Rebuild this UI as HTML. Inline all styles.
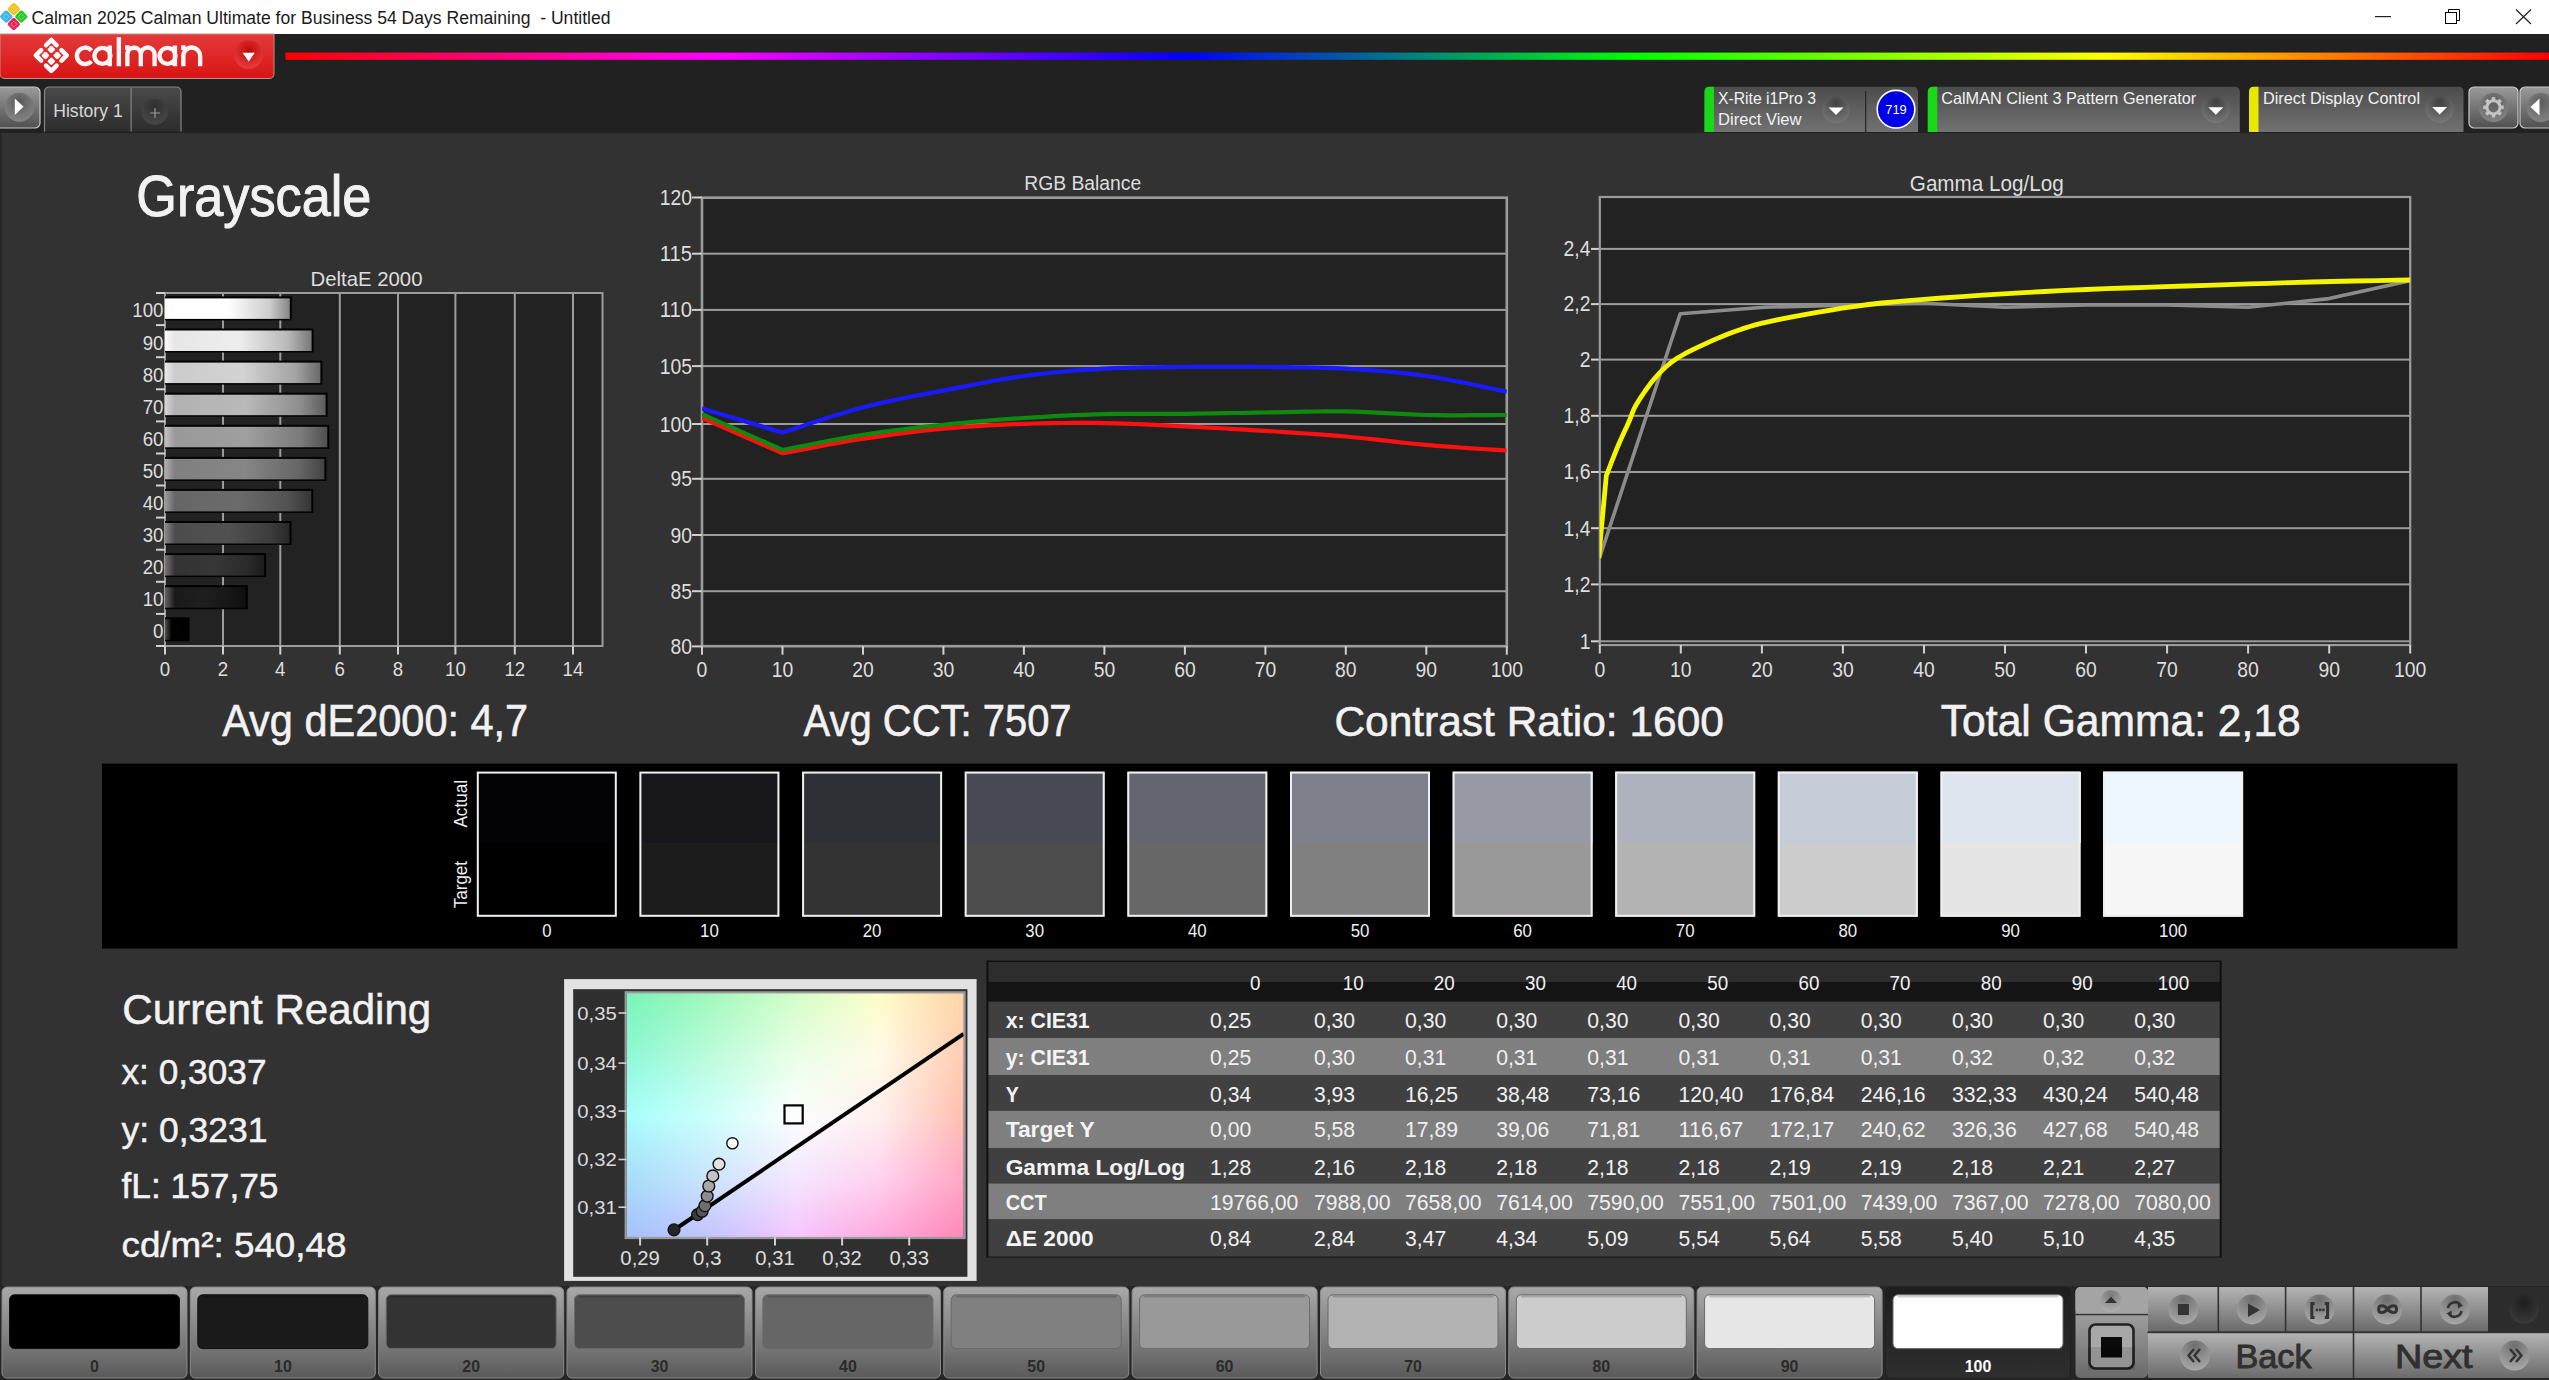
<!DOCTYPE html>
<html><head><meta charset="utf-8"><title>Calman Grayscale</title>
<style>
html,body{margin:0;padding:0;background:#323232;overflow:hidden;}
#app{position:relative;width:2549px;height:1380px;overflow:hidden;}
svg text{font-family:"Liberation Sans", sans-serif;}
</style></head><body><div id="app">
<svg width="2549" height="1380" viewBox="0 0 2549 1380" style="display:block">
<defs><linearGradient id="gRed" x1="0" y1="0" x2="0" y2="1"><stop offset="0" stop-color="#e43a3a"/><stop offset="1" stop-color="#d81414"/></linearGradient><radialGradient id="gRedBtn" cx="0.5" cy="0.35" r="0.6"><stop offset="0" stop-color="#c00a0a"/><stop offset="1" stop-color="#e43a3a"/></radialGradient><linearGradient id="gRain" x1="0" y1="0" x2="1" y2="0"><stop offset="0" stop-color="#ff0000"/><stop offset="0.19" stop-color="#ff00ff"/><stop offset="0.398" stop-color="#0000ff"/><stop offset="0.596" stop-color="#00ff00"/><stop offset="0.803" stop-color="#ffff00"/><stop offset="1" stop-color="#ff0000"/></linearGradient><linearGradient id="gBtnG" x1="0" y1="0" x2="0" y2="1"><stop offset="0" stop-color="#9a9a9a"/><stop offset="1" stop-color="#505050"/></linearGradient><radialGradient id="gCirc" cx="0.5" cy="0.3" r="0.7"><stop offset="0" stop-color="#555"/><stop offset="1" stop-color="#8a8a8a"/></radialGradient><linearGradient id="gTab" x1="0" y1="0" x2="0" y2="1"><stop offset="0" stop-color="#4a4a4a"/><stop offset="1" stop-color="#2c2c2c"/></linearGradient><radialGradient id="gPlus" cx="0.5" cy="0.3" r="0.7"><stop offset="0" stop-color="#2e2e2e"/><stop offset="1" stop-color="#484848"/></radialGradient><linearGradient id="gDev" x1="0" y1="0" x2="0" y2="1"><stop offset="0" stop-color="#4c4c4c"/><stop offset="1" stop-color="#727272"/></linearGradient><radialGradient id="gDrop" cx="0.5" cy="0.25" r="0.75"><stop offset="0" stop-color="#404040"/><stop offset="1" stop-color="#787878"/></radialGradient><linearGradient id="gBar100" x1="0" y1="0" x2="1" y2="0"><stop offset="0" stop-color="#ffffff"/><stop offset="0.079" stop-color="#ffffff"/><stop offset="0.5" stop-color="#ffffff"/><stop offset="0.84" stop-color="#cccccc"/><stop offset="1" stop-color="#858585"/></linearGradient><linearGradient id="gBar90" x1="0" y1="0" x2="1" y2="0"><stop offset="0" stop-color="#fbfbfb"/><stop offset="0.067" stop-color="#e6e6e6"/><stop offset="0.5" stop-color="#eeeeee"/><stop offset="0.84" stop-color="#b8b8b8"/><stop offset="1" stop-color="#787878"/></linearGradient><linearGradient id="gBar80" x1="0" y1="0" x2="1" y2="0"><stop offset="0" stop-color="#e8e8e8"/><stop offset="0.064" stop-color="#cccccc"/><stop offset="0.5" stop-color="#d3d3d3"/><stop offset="0.84" stop-color="#a3a3a3"/><stop offset="1" stop-color="#6a6a6a"/></linearGradient><linearGradient id="gBar70" x1="0" y1="0" x2="1" y2="0"><stop offset="0" stop-color="#d5d5d5"/><stop offset="0.062" stop-color="#b2b2b2"/><stop offset="0.5" stop-color="#b9b9b9"/><stop offset="0.84" stop-color="#8e8e8e"/><stop offset="1" stop-color="#5d5d5d"/></linearGradient><linearGradient id="gBar60" x1="0" y1="0" x2="1" y2="0"><stop offset="0" stop-color="#c2c2c2"/><stop offset="0.061" stop-color="#999999"/><stop offset="0.5" stop-color="#9f9f9f"/><stop offset="0.84" stop-color="#7a7a7a"/><stop offset="1" stop-color="#505050"/></linearGradient><linearGradient id="gBar50" x1="0" y1="0" x2="1" y2="0"><stop offset="0" stop-color="#afafaf"/><stop offset="0.062" stop-color="#808080"/><stop offset="0.5" stop-color="#868686"/><stop offset="0.84" stop-color="#666666"/><stop offset="1" stop-color="#434343"/></linearGradient><linearGradient id="gBar40" x1="0" y1="0" x2="1" y2="0"><stop offset="0" stop-color="#9c9c9c"/><stop offset="0.067" stop-color="#666666"/><stop offset="0.5" stop-color="#6b6b6b"/><stop offset="0.84" stop-color="#525252"/><stop offset="1" stop-color="#353535"/></linearGradient><linearGradient id="gBar30" x1="0" y1="0" x2="1" y2="0"><stop offset="0" stop-color="#898989"/><stop offset="0.079" stop-color="#4c4c4c"/><stop offset="0.5" stop-color="#515151"/><stop offset="0.84" stop-color="#3d3d3d"/><stop offset="1" stop-color="#282828"/></linearGradient><linearGradient id="gBar20" x1="0" y1="0" x2="1" y2="0"><stop offset="0" stop-color="#767676"/><stop offset="0.099" stop-color="#333333"/><stop offset="0.5" stop-color="#373737"/><stop offset="0.84" stop-color="#292929"/><stop offset="1" stop-color="#1b1b1b"/></linearGradient><linearGradient id="gBar10" x1="0" y1="0" x2="1" y2="0"><stop offset="0" stop-color="#636363"/><stop offset="0.121" stop-color="#1a1a1a"/><stop offset="0.5" stop-color="#1e1e1e"/><stop offset="0.84" stop-color="#151515"/><stop offset="1" stop-color="#0e0e0e"/></linearGradient><linearGradient id="gBar0" x1="0" y1="0" x2="1" y2="0"><stop offset="0" stop-color="#505050"/><stop offset="0.300" stop-color="#000000"/><stop offset="0.5" stop-color="#030303"/><stop offset="0.84" stop-color="#000000"/><stop offset="1" stop-color="#000000"/></linearGradient><linearGradient id="gRow0" x1="0" y1="0" x2="1" y2="0"><stop offset="0.0" stop-color="#78f4b6"/><stop offset="0.25" stop-color="#a2f8bc"/><stop offset="0.5" stop-color="#d2fec8"/><stop offset="0.75" stop-color="#fffcc8"/><stop offset="1.0" stop-color="#ffd6a6"/></linearGradient><linearGradient id="gRow1" x1="0" y1="0" x2="1" y2="0"><stop offset="0.0" stop-color="#8ef8d6"/><stop offset="0.25" stop-color="#bcfcdc"/><stop offset="0.5" stop-color="#eaffe6"/><stop offset="0.75" stop-color="#fffbe8"/><stop offset="1.0" stop-color="#ffccb2"/></linearGradient><linearGradient id="gRow2" x1="0" y1="0" x2="1" y2="0"><stop offset="0.0" stop-color="#a6fffc"/><stop offset="0.25" stop-color="#cefffc"/><stop offset="0.5" stop-color="#fcfffe"/><stop offset="0.75" stop-color="#fff0ee"/><stop offset="1.0" stop-color="#ffbeb0"/></linearGradient><linearGradient id="gRow3" x1="0" y1="0" x2="1" y2="0"><stop offset="0.0" stop-color="#a8def8"/><stop offset="0.25" stop-color="#cce6ff"/><stop offset="0.5" stop-color="#f4e8ff"/><stop offset="0.75" stop-color="#ffd4f0"/><stop offset="1.0" stop-color="#ffa8c4"/></linearGradient><linearGradient id="gRow4" x1="0" y1="0" x2="1" y2="0"><stop offset="0.0" stop-color="#a4c2ff"/><stop offset="0.25" stop-color="#c6c4ff"/><stop offset="0.5" stop-color="#f6c6ff"/><stop offset="0.75" stop-color="#ffaadc"/><stop offset="1.0" stop-color="#ff88b8"/></linearGradient><linearGradient id="gMk3" x1="0" y1="0" x2="0" y2="1"><stop offset="0.75" stop-color="#fff"/><stop offset="1.0" stop-color="#000"/></linearGradient><mask id="mk3" maskUnits="userSpaceOnUse" x="626.7" y="993.3" width="336.9" height="243.70000000000005"><rect x="626.7" y="993.3" width="336.9" height="243.70000000000005" fill="url(#gMk3)"/></mask><linearGradient id="gMk2" x1="0" y1="0" x2="0" y2="1"><stop offset="0.5" stop-color="#fff"/><stop offset="0.75" stop-color="#000"/></linearGradient><mask id="mk2" maskUnits="userSpaceOnUse" x="626.7" y="993.3" width="336.9" height="243.70000000000005"><rect x="626.7" y="993.3" width="336.9" height="243.70000000000005" fill="url(#gMk2)"/></mask><linearGradient id="gMk1" x1="0" y1="0" x2="0" y2="1"><stop offset="0.25" stop-color="#fff"/><stop offset="0.5" stop-color="#000"/></linearGradient><mask id="mk1" maskUnits="userSpaceOnUse" x="626.7" y="993.3" width="336.9" height="243.70000000000005"><rect x="626.7" y="993.3" width="336.9" height="243.70000000000005" fill="url(#gMk1)"/></mask><linearGradient id="gMk0" x1="0" y1="0" x2="0" y2="1"><stop offset="0.0" stop-color="#fff"/><stop offset="0.25" stop-color="#000"/></linearGradient><mask id="mk0" maskUnits="userSpaceOnUse" x="626.7" y="993.3" width="336.9" height="243.70000000000005"><rect x="626.7" y="993.3" width="336.9" height="243.70000000000005" fill="url(#gMk0)"/></mask><linearGradient id="gSw" x1="0" y1="0" x2="0" y2="1"><stop offset="0" stop-color="#a8a8a8"/><stop offset="0.62" stop-color="#7a7a7a"/><stop offset="1" stop-color="#5a5a5a"/></linearGradient><linearGradient id="gSwSel" x1="0" y1="0" x2="0" y2="1"><stop offset="0" stop-color="#1e1e1e"/><stop offset="1" stop-color="#2e2e2e"/></linearGradient><linearGradient id="gCtl" x1="0" y1="0" x2="0" y2="1"><stop offset="0" stop-color="#b4b4b4"/><stop offset="1" stop-color="#6a6a6a"/></linearGradient><radialGradient id="gCtlC" cx="0.5" cy="0.2" r="0.8"><stop offset="0" stop-color="#7a7a7a"/><stop offset="1" stop-color="#b0b0b0"/></radialGradient><radialGradient id="gDark" cx="0.5" cy="0.3" r="0.7"><stop offset="0" stop-color="#1e1e1e"/><stop offset="1" stop-color="#3a3a3a"/></radialGradient><radialGradient id="gTr" cx="0.5" cy="0.15" r="0.85"><stop offset="0" stop-color="#6e6e6e"/><stop offset="1" stop-color="#a8a8a8"/></radialGradient></defs>
<rect x="0" y="0" width="2549" height="34" fill="#ffffff"/>
<g transform="translate(13.8,16.6) rotate(45)"><rect x="-10.2" y="-10.2" width="9.8" height="9.8" rx="2" fill="#f7c21b"/><rect x="0.4" y="-10.2" width="9.8" height="9.8" rx="2" fill="#2ac82a"/><rect x="-10.2" y="0.4" width="9.8" height="9.8" rx="2" fill="#38b6f0"/><rect x="0.4" y="0.4" width="9.8" height="9.8" rx="2" fill="#e8245a"/><rect x="-7.4" y="-7.4" width="4.2" height="4.2" fill="none" stroke="#fff" stroke-opacity="0.45" stroke-width="0.8"/><rect x="3.2" y="-7.4" width="4.2" height="4.2" fill="none" stroke="#fff" stroke-opacity="0.45" stroke-width="0.8"/><rect x="-7.4" y="3.2" width="4.2" height="4.2" fill="none" stroke="#fff" stroke-opacity="0.45" stroke-width="0.8"/><rect x="3.2" y="3.2" width="4.2" height="4.2" fill="none" stroke="#fff" stroke-opacity="0.45" stroke-width="0.8"/></g>
<text x="31.5" y="23.9" font-size="19.19" fill="#1a1a1a" text-anchor="start" textLength="579.0" lengthAdjust="spacingAndGlyphs" xml:space="preserve">Calman 2025 Calman Ultimate for Business 54 Days Remaining  - Untitled</text>
<rect x="2375" y="16" width="16" height="1.2" fill="#222"/>
<rect x="2445.5" y="12.5" width="11" height="11" fill="none" stroke="#000" stroke-width="1"/>
<path d="M2448.5 12.5 V9.5 H2459.5 V20.5 H2456.5" fill="none" stroke="#000" stroke-width="1"/>
<path d="M2516 9.5 L2531 24 M2531 9.5 L2516 24" stroke="#222" stroke-width="1.2"/>
<rect x="0" y="34" width="2549" height="99" fill="#212121"/>
<path d="M0 34 H274 V73.5 Q274 78.5 269 78.5 H5 Q0 78.5 0 73.5 Z" fill="url(#gRed)" stroke="#c09088" stroke-width="1"/>
<g transform="translate(51.3 55.4) scale(1.07) rotate(45)"><path d="M-10.2 -3.2 V-10.2 H-3.2 M3.2 -10.2 H10.2 V-3.2 M10.2 3.2 V10.2 H3.2 M-3.2 10.2 H-10.2 V3.2" fill="none" stroke="#fff" stroke-width="4.2" stroke-linecap="round" stroke-linejoin="round"/><rect x="-6.7" y="-6.7" width="5.6" height="5.6" rx="1.3" fill="#fff"/><rect x="1.1" y="-6.7" width="5.6" height="5.6" rx="1.3" fill="#fff"/><rect x="-6.7" y="1.1" width="5.6" height="5.6" rx="1.3" fill="#fff"/><rect x="1.1" y="1.1" width="5.6" height="5.6" rx="1.3" fill="#fff"/></g>
<path d="M91.38 50.58 A8.20 8.20 0 1 0 91.38 61.12 M94.40 55.85 A8.00 8.00 0 1 0 110.40 55.85 A8.00 8.00 0 1 0 94.40 55.85 Z M109.80 45.4 V66.3 M159.50 55.85 A8.00 8.00 0 1 0 175.50 55.85 A8.00 8.00 0 1 0 159.50 55.85 Z M174.90 45.4 V66.3 M118.85 37.3 V66.3 M127.35 66.3 V54.23 A6.73 6.73 0 0 1 140.8 54.23 V66.3 M140.8 54.40 A6.90 6.90 0 0 1 154.6 54.40 V66.3 M127.35 45.3 V50 M183.35 66.3 V55.90 A8.40 8.40 0 0 1 200.15 55.90 V66.3 M183.35 45.3 V50" fill="none" stroke="#fdf6f6" stroke-width="4.4" stroke-linecap="butt"/>
<circle cx="248.6" cy="54.6" r="14.4" fill="url(#gRedBtn)"/>
<path d="M242.6 52.8 H254.8 L248.7 61.5 Z" fill="#fff"/>
<rect x="285.5" y="52.6" width="2263.5" height="7.2" fill="url(#gRain)"/>
<rect x="-6" y="87" width="46" height="41" rx="5" fill="url(#gBtnG)" stroke="#c8c8c8" stroke-width="1.2"/>
<circle cx="19.5" cy="107.3" r="14.5" fill="url(#gCirc)" opacity="0.9"/>
<path d="M14.8 98.5 L23.5 106.8 L14.8 115 Z" fill="#fff"/>
<path d="M44.5 131.5 V92 Q44.5 87 49.5 87 H176 Q181 87 181 92 V131.5" fill="url(#gTab)" stroke="#858585" stroke-width="1.2"/>
<rect x="130.5" y="88" width="1.2" height="43.5" fill="#858585"/>
<text x="53.2" y="116.7" font-size="18.17" fill="#d8d8d8" text-anchor="start" textLength="69.5" lengthAdjust="spacingAndGlyphs">History 1</text>
<circle cx="154.7" cy="111.7" r="13" fill="url(#gPlus)"/>
<path d="M150 113 H160 M155 108 V118" stroke="#9a9a9a" stroke-width="1.2"/>
<path d="M1704.5 132 V92 Q1704.5 86.7 1709.5 86.7 H1913 Q1918 86.7 1918 92 V132 Z" fill="url(#gDev)"/>
<path d="M1704.5 132 V92 Q1704.5 86.7 1709.5 86.7 H1714.0 V132 Z" fill="#18d818"/>
<text x="1718.0" y="104.0" font-size="16.42" fill="#f2f2f2" text-anchor="start" textLength="98.0" lengthAdjust="spacingAndGlyphs">X-Rite i1Pro 3</text>
<text x="1718.0" y="125.4" font-size="16.42" fill="#f2f2f2" text-anchor="start" textLength="83.5" lengthAdjust="spacingAndGlyphs">Direct View</text>
<circle cx="1836" cy="109.6" r="14" fill="url(#gDrop)"/>
<path d="M1828.5 107.6 H1843.5 L1836 115.1 Z" fill="#fff"/>
<rect x="1865" y="91" width="1.3" height="41" fill="#2a2a2a"/>
<circle cx="1896" cy="109.2" r="18.8" fill="#0000e6" stroke="#ffffff" stroke-width="1.6"/>
<text x="1885.3" y="113.8" font-size="12.06" fill="#ffffff" text-anchor="start" textLength="21.5" lengthAdjust="spacingAndGlyphs">719</text>
<path d="M1927.8 132 V92 Q1927.8 86.7 1932.8 86.7 H2234.8 Q2239.8 86.7 2239.8 92 V132 Z" fill="url(#gDev)"/>
<path d="M1927.8 132 V92 Q1927.8 86.7 1932.8 86.7 H1937.3 V132 Z" fill="#18d818"/>
<text x="1941.2" y="104.0" font-size="16.28" fill="#f2f2f2" text-anchor="start" textLength="255.0" lengthAdjust="spacingAndGlyphs">CalMAN Client 3 Pattern Generator</text>
<circle cx="2215.8" cy="109.3" r="14" fill="url(#gDrop)"/>
<path d="M2208.3 107.3 H2223.3 L2215.8 114.8 Z" fill="#fff"/>
<path d="M2249 132 V92 Q2249 86.7 2254 86.7 H2458.5 Q2463.5 86.7 2463.5 92 V132 Z" fill="url(#gDev)"/>
<path d="M2249 132 V92 Q2249 86.7 2254 86.7 H2258.5 V132 Z" fill="#e8e800"/>
<text x="2263.0" y="104.0" font-size="16.28" fill="#f2f2f2" text-anchor="start" textLength="157.0" lengthAdjust="spacingAndGlyphs">Direct Display Control</text>
<circle cx="2439.6" cy="108.9" r="14" fill="url(#gDrop)"/>
<path d="M2432.1 106.9 H2447.1 L2439.6 114.4 Z" fill="#fff"/>
<rect x="2469" y="87" width="49" height="41" rx="5" fill="url(#gBtnG)" stroke="#c8c8c8" stroke-width="1.2"/>
<circle cx="2493.5" cy="107.5" r="14.5" fill="url(#gCirc)" opacity="0.85"/>
<g transform="translate(2493.5 107.3)"><rect x="-1.8" y="-10.2" width="3.6" height="4.5" transform="rotate(0)" fill="#c4c4c4"/><rect x="-1.8" y="-10.2" width="3.6" height="4.5" transform="rotate(45)" fill="#c4c4c4"/><rect x="-1.8" y="-10.2" width="3.6" height="4.5" transform="rotate(90)" fill="#c4c4c4"/><rect x="-1.8" y="-10.2" width="3.6" height="4.5" transform="rotate(135)" fill="#c4c4c4"/><rect x="-1.8" y="-10.2" width="3.6" height="4.5" transform="rotate(180)" fill="#c4c4c4"/><rect x="-1.8" y="-10.2" width="3.6" height="4.5" transform="rotate(225)" fill="#c4c4c4"/><rect x="-1.8" y="-10.2" width="3.6" height="4.5" transform="rotate(270)" fill="#c4c4c4"/><rect x="-1.8" y="-10.2" width="3.6" height="4.5" transform="rotate(315)" fill="#c4c4c4"/><circle r="6.6" fill="none" stroke="#c4c4c4" stroke-width="3"/></g>
<rect x="2520" y="87" width="40" height="41" rx="5" fill="url(#gBtnG)" stroke="#c8c8c8" stroke-width="1.2"/>
<circle cx="2541" cy="107.5" r="14.5" fill="url(#gCirc)" opacity="0.85"/>
<path d="M2539.5 98.5 L2530.5 107 L2539.5 115.5 Z" fill="#fff"/>
<rect x="0" y="133" width="2549" height="1153" fill="#323232"/>
<rect x="0" y="133" width="2" height="1153" fill="#262626"/>
<text x="136.3" y="216.0" font-size="58.14" fill="#f2f2f2" text-anchor="start" textLength="235.0" lengthAdjust="spacingAndGlyphs" stroke="#f2f2f2" stroke-width="1.0">Grayscale</text>
<text x="310.5" y="285.5" font-size="20.49" fill="#dedede" text-anchor="start" textLength="112.0" lengthAdjust="spacingAndGlyphs">DeltaE 2000</text>
<rect x="165" y="293" width="437.5" height="353" fill="#222222"/>
<rect x="222.0" y="293" width="2" height="353" fill="#9c9c9c"/>
<rect x="279.3" y="293" width="2" height="353" fill="#9c9c9c"/>
<rect x="338.8" y="293" width="2" height="353" fill="#9c9c9c"/>
<rect x="397.0" y="293" width="2" height="353" fill="#9c9c9c"/>
<rect x="454.4" y="293" width="2" height="353" fill="#9c9c9c"/>
<rect x="513.8" y="293" width="2" height="353" fill="#9c9c9c"/>
<rect x="572.0" y="293" width="2" height="353" fill="#9c9c9c"/>
<rect x="165" y="293" width="437.5" height="353" fill="none" stroke="#9c9c9c" stroke-width="2"/>
<rect x="164.0" y="646" width="2" height="8.5" fill="#d0d0d0"/>
<text x="165.0" y="676.4" font-size="20.35" fill="#dedede" text-anchor="middle" textLength="10.4" lengthAdjust="spacingAndGlyphs">0</text>
<rect x="222.0" y="646" width="2" height="8.5" fill="#d0d0d0"/>
<text x="223.0" y="676.4" font-size="20.35" fill="#dedede" text-anchor="middle" textLength="10.4" lengthAdjust="spacingAndGlyphs">2</text>
<rect x="279.3" y="646" width="2" height="8.5" fill="#d0d0d0"/>
<text x="280.3" y="676.4" font-size="20.35" fill="#dedede" text-anchor="middle" textLength="10.4" lengthAdjust="spacingAndGlyphs">4</text>
<rect x="338.8" y="646" width="2" height="8.5" fill="#d0d0d0"/>
<text x="339.8" y="676.4" font-size="20.35" fill="#dedede" text-anchor="middle" textLength="10.4" lengthAdjust="spacingAndGlyphs">6</text>
<rect x="397.0" y="646" width="2" height="8.5" fill="#d0d0d0"/>
<text x="398.0" y="676.4" font-size="20.35" fill="#dedede" text-anchor="middle" textLength="10.4" lengthAdjust="spacingAndGlyphs">8</text>
<rect x="454.4" y="646" width="2" height="8.5" fill="#d0d0d0"/>
<text x="455.4" y="676.4" font-size="20.35" fill="#dedede" text-anchor="middle" textLength="20.8" lengthAdjust="spacingAndGlyphs">10</text>
<rect x="513.8" y="646" width="2" height="8.5" fill="#d0d0d0"/>
<text x="514.8" y="676.4" font-size="20.35" fill="#dedede" text-anchor="middle" textLength="20.8" lengthAdjust="spacingAndGlyphs">12</text>
<rect x="572.0" y="646" width="2" height="8.5" fill="#d0d0d0"/>
<text x="573.0" y="676.4" font-size="20.35" fill="#dedede" text-anchor="middle" textLength="20.8" lengthAdjust="spacingAndGlyphs">14</text>
<rect x="156" y="292.0" width="9" height="2" fill="#d0d0d0"/>
<rect x="156" y="324.1" width="9" height="2" fill="#d0d0d0"/>
<rect x="156" y="356.2" width="9" height="2" fill="#d0d0d0"/>
<rect x="156" y="388.3" width="9" height="2" fill="#d0d0d0"/>
<rect x="156" y="420.4" width="9" height="2" fill="#d0d0d0"/>
<rect x="156" y="452.5" width="9" height="2" fill="#d0d0d0"/>
<rect x="156" y="484.5" width="9" height="2" fill="#d0d0d0"/>
<rect x="156" y="516.6" width="9" height="2" fill="#d0d0d0"/>
<rect x="156" y="548.7" width="9" height="2" fill="#d0d0d0"/>
<rect x="156" y="580.8" width="9" height="2" fill="#d0d0d0"/>
<rect x="156" y="612.9" width="9" height="2" fill="#d0d0d0"/>
<rect x="156" y="645.0" width="9" height="2" fill="#d0d0d0"/>
<text x="132.3" y="317.4" font-size="20.35" fill="#dedede" text-anchor="start" textLength="31.2" lengthAdjust="spacingAndGlyphs">100</text>
<rect x="165" y="296.4" width="126.8" height="24" fill="#000"/>
<rect x="165" y="298.4" width="124.8" height="20.5" fill="url(#gBar100)"/>
<text x="142.7" y="349.5" font-size="20.35" fill="#dedede" text-anchor="start" textLength="20.8" lengthAdjust="spacingAndGlyphs">90</text>
<rect x="165" y="328.5" width="148.6" height="24" fill="#000"/>
<rect x="165" y="330.5" width="146.6" height="20.5" fill="url(#gBar90)"/>
<text x="142.7" y="381.6" font-size="20.35" fill="#dedede" text-anchor="start" textLength="20.8" lengthAdjust="spacingAndGlyphs">80</text>
<rect x="165" y="360.6" width="157.4" height="24" fill="#000"/>
<rect x="165" y="362.6" width="155.4" height="20.5" fill="url(#gBar80)"/>
<text x="142.7" y="413.7" font-size="20.35" fill="#dedede" text-anchor="start" textLength="20.8" lengthAdjust="spacingAndGlyphs">70</text>
<rect x="165" y="392.7" width="162.6" height="24" fill="#000"/>
<rect x="165" y="394.7" width="160.6" height="20.5" fill="url(#gBar70)"/>
<text x="142.7" y="445.8" font-size="20.35" fill="#dedede" text-anchor="start" textLength="20.8" lengthAdjust="spacingAndGlyphs">60</text>
<rect x="165" y="424.8" width="164.3" height="24" fill="#000"/>
<rect x="165" y="426.8" width="162.3" height="20.5" fill="url(#gBar60)"/>
<text x="142.7" y="477.9" font-size="20.35" fill="#dedede" text-anchor="start" textLength="20.8" lengthAdjust="spacingAndGlyphs">50</text>
<rect x="165" y="456.9" width="161.4" height="24" fill="#000"/>
<rect x="165" y="458.9" width="159.4" height="20.5" fill="url(#gBar50)"/>
<text x="142.7" y="510.0" font-size="20.35" fill="#dedede" text-anchor="start" textLength="20.8" lengthAdjust="spacingAndGlyphs">40</text>
<rect x="165" y="488.9" width="148.3" height="24" fill="#000"/>
<rect x="165" y="490.9" width="146.3" height="20.5" fill="url(#gBar40)"/>
<text x="142.7" y="542.1" font-size="20.35" fill="#dedede" text-anchor="start" textLength="20.8" lengthAdjust="spacingAndGlyphs">30</text>
<rect x="165" y="521.0" width="126.5" height="24" fill="#000"/>
<rect x="165" y="523.0" width="124.5" height="20.5" fill="url(#gBar30)"/>
<text x="142.7" y="574.2" font-size="20.35" fill="#dedede" text-anchor="start" textLength="20.8" lengthAdjust="spacingAndGlyphs">20</text>
<rect x="165" y="553.1" width="101.1" height="24" fill="#000"/>
<rect x="165" y="555.1" width="99.1" height="20.5" fill="url(#gBar20)"/>
<text x="142.7" y="606.3" font-size="20.35" fill="#dedede" text-anchor="start" textLength="20.8" lengthAdjust="spacingAndGlyphs">10</text>
<rect x="165" y="585.2" width="82.8" height="24" fill="#000"/>
<rect x="165" y="587.2" width="80.8" height="20.5" fill="url(#gBar10)"/>
<text x="153.1" y="638.4" font-size="20.35" fill="#dedede" text-anchor="start" textLength="10.4" lengthAdjust="spacingAndGlyphs">0</text>
<rect x="165" y="617.3" width="24.5" height="24" fill="#000"/>
<rect x="165" y="619.3" width="22.5" height="20.5" fill="url(#gBar0)"/>
<text x="1024.2" y="190.1" font-size="21.08" fill="#dedede" text-anchor="start" textLength="117.0" lengthAdjust="spacingAndGlyphs">RGB Balance</text>
<rect x="702" y="197.7" width="804.8" height="448.50000000000006" fill="#222222"/>
<rect x="702" y="590.2" width="804.8" height="2" fill="#9c9c9c"/>
<rect x="702" y="534.0" width="804.8" height="2" fill="#9c9c9c"/>
<rect x="702" y="477.8" width="804.8" height="2" fill="#9c9c9c"/>
<rect x="702" y="423.0" width="804.8" height="2" fill="#9c9c9c"/>
<rect x="702" y="365.1" width="804.8" height="2" fill="#9c9c9c"/>
<rect x="702" y="308.9" width="804.8" height="2" fill="#9c9c9c"/>
<rect x="702" y="252.7" width="804.8" height="2" fill="#9c9c9c"/>
<rect x="702" y="197.7" width="804.8" height="448.50000000000006" fill="none" stroke="#9c9c9c" stroke-width="2.6"/>
<rect x="692" y="645.4" width="10" height="2" fill="#d0d0d0"/>
<text x="670.5" y="653.9" font-size="21.22" fill="#dedede" text-anchor="start" textLength="21.5" lengthAdjust="spacingAndGlyphs">80</text>
<rect x="692" y="590.2" width="10" height="2" fill="#d0d0d0"/>
<text x="670.5" y="598.7" font-size="21.22" fill="#dedede" text-anchor="start" textLength="21.5" lengthAdjust="spacingAndGlyphs">85</text>
<rect x="692" y="534.0" width="10" height="2" fill="#d0d0d0"/>
<text x="670.5" y="542.5" font-size="21.22" fill="#dedede" text-anchor="start" textLength="21.5" lengthAdjust="spacingAndGlyphs">90</text>
<rect x="692" y="477.8" width="10" height="2" fill="#d0d0d0"/>
<text x="670.5" y="486.3" font-size="21.22" fill="#dedede" text-anchor="start" textLength="21.5" lengthAdjust="spacingAndGlyphs">95</text>
<rect x="692" y="423.0" width="10" height="2" fill="#d0d0d0"/>
<text x="659.7" y="431.5" font-size="21.22" fill="#dedede" text-anchor="start" textLength="32.3" lengthAdjust="spacingAndGlyphs">100</text>
<rect x="692" y="365.1" width="10" height="2" fill="#d0d0d0"/>
<text x="659.7" y="373.6" font-size="21.22" fill="#dedede" text-anchor="start" textLength="32.3" lengthAdjust="spacingAndGlyphs">105</text>
<rect x="692" y="308.9" width="10" height="2" fill="#d0d0d0"/>
<text x="659.7" y="317.4" font-size="21.22" fill="#dedede" text-anchor="start" textLength="32.3" lengthAdjust="spacingAndGlyphs">110</text>
<rect x="692" y="252.7" width="10" height="2" fill="#d0d0d0"/>
<text x="659.7" y="261.2" font-size="21.22" fill="#dedede" text-anchor="start" textLength="32.3" lengthAdjust="spacingAndGlyphs">115</text>
<rect x="692" y="196.5" width="10" height="2" fill="#d0d0d0"/>
<text x="659.7" y="205.0" font-size="21.22" fill="#dedede" text-anchor="start" textLength="32.3" lengthAdjust="spacingAndGlyphs">120</text>
<rect x="701.0" y="646.2" width="2" height="8.5" fill="#d0d0d0"/>
<text x="702.0" y="676.8" font-size="21.22" fill="#dedede" text-anchor="middle" textLength="10.8" lengthAdjust="spacingAndGlyphs">0</text>
<rect x="781.5" y="646.2" width="2" height="8.5" fill="#d0d0d0"/>
<text x="782.5" y="676.8" font-size="21.22" fill="#dedede" text-anchor="middle" textLength="21.5" lengthAdjust="spacingAndGlyphs">10</text>
<rect x="862.0" y="646.2" width="2" height="8.5" fill="#d0d0d0"/>
<text x="863.0" y="676.8" font-size="21.22" fill="#dedede" text-anchor="middle" textLength="21.5" lengthAdjust="spacingAndGlyphs">20</text>
<rect x="942.4" y="646.2" width="2" height="8.5" fill="#d0d0d0"/>
<text x="943.4" y="676.8" font-size="21.22" fill="#dedede" text-anchor="middle" textLength="21.5" lengthAdjust="spacingAndGlyphs">30</text>
<rect x="1022.9" y="646.2" width="2" height="8.5" fill="#d0d0d0"/>
<text x="1023.9" y="676.8" font-size="21.22" fill="#dedede" text-anchor="middle" textLength="21.5" lengthAdjust="spacingAndGlyphs">40</text>
<rect x="1103.4" y="646.2" width="2" height="8.5" fill="#d0d0d0"/>
<text x="1104.4" y="676.8" font-size="21.22" fill="#dedede" text-anchor="middle" textLength="21.5" lengthAdjust="spacingAndGlyphs">50</text>
<rect x="1183.9" y="646.2" width="2" height="8.5" fill="#d0d0d0"/>
<text x="1184.9" y="676.8" font-size="21.22" fill="#dedede" text-anchor="middle" textLength="21.5" lengthAdjust="spacingAndGlyphs">60</text>
<rect x="1264.4" y="646.2" width="2" height="8.5" fill="#d0d0d0"/>
<text x="1265.4" y="676.8" font-size="21.22" fill="#dedede" text-anchor="middle" textLength="21.5" lengthAdjust="spacingAndGlyphs">70</text>
<rect x="1344.8" y="646.2" width="2" height="8.5" fill="#d0d0d0"/>
<text x="1345.8" y="676.8" font-size="21.22" fill="#dedede" text-anchor="middle" textLength="21.5" lengthAdjust="spacingAndGlyphs">80</text>
<rect x="1425.3" y="646.2" width="2" height="8.5" fill="#d0d0d0"/>
<text x="1426.3" y="676.8" font-size="21.22" fill="#dedede" text-anchor="middle" textLength="21.5" lengthAdjust="spacingAndGlyphs">90</text>
<rect x="1505.8" y="646.2" width="2" height="8.5" fill="#d0d0d0"/>
<text x="1506.8" y="676.8" font-size="21.22" fill="#dedede" text-anchor="middle" textLength="32.3" lengthAdjust="spacingAndGlyphs">100</text>
<svg x="702" y="197.7" width="804.8" height="448.50000000000006" overflow="hidden"><g transform="translate(-702,-197.7)">
<path d="M702.0 418.0 L782.5 453.3 L788.7 452.2 L796.9 450.6 L806.8 448.7 L817.7 446.7 L829.2 444.5 L841.0 442.4 L852.3 440.5 L863.0 438.8 L873.0 437.3 L883.1 435.8 L893.1 434.4 L903.2 433.1 L913.3 431.9 L923.3 430.7 L933.4 429.7 L943.4 428.7 L953.5 427.8 L963.6 427.0 L973.6 426.3 L983.7 425.7 L993.7 425.1 L1003.8 424.7 L1013.9 424.2 L1023.9 423.9 L1034.0 423.5 L1044.0 423.3 L1054.1 423.1 L1064.2 423.0 L1074.2 422.9 L1084.3 422.9 L1094.3 422.9 L1104.4 423.1 L1114.5 423.3 L1124.5 423.6 L1134.6 424.0 L1144.6 424.4 L1154.7 424.9 L1164.8 425.4 L1174.8 425.9 L1184.9 426.4 L1194.9 426.9 L1205.0 427.5 L1215.1 428.0 L1225.1 428.5 L1235.2 429.1 L1245.2 429.7 L1255.3 430.3 L1265.4 430.9 L1275.4 431.5 L1285.5 432.2 L1295.5 432.8 L1305.6 433.5 L1315.7 434.2 L1325.7 434.9 L1335.8 435.7 L1345.8 436.5 L1355.9 437.5 L1366.0 438.5 L1376.0 439.6 L1386.1 440.7 L1396.1 441.9 L1406.2 443.0 L1416.3 444.0 L1426.3 444.9 L1436.9 445.8 L1448.3 446.7 L1460.0 447.5 L1471.6 448.3 L1482.5 449.0 L1492.3 449.6 L1500.6 450.1 L1506.8 450.5" fill="none" stroke="#ff1010" stroke-width="4.2" stroke-linejoin="miter"/>
<path d="M702.0 414.1 L782.5 450.0 L788.7 448.8 L796.9 447.1 L806.8 445.2 L817.7 443.0 L829.2 440.8 L841.0 438.6 L852.3 436.6 L863.0 434.8 L873.0 433.3 L883.1 431.9 L893.1 430.5 L903.2 429.3 L913.3 428.1 L923.3 426.9 L933.4 425.8 L943.4 424.8 L953.5 423.7 L963.6 422.8 L973.6 421.9 L983.7 421.0 L993.7 420.2 L1003.8 419.4 L1013.9 418.7 L1023.9 418.0 L1034.0 417.4 L1044.0 416.8 L1054.1 416.2 L1064.2 415.7 L1074.2 415.2 L1084.3 414.8 L1094.3 414.4 L1104.4 414.1 L1114.5 413.9 L1124.5 413.8 L1134.6 413.8 L1144.6 413.8 L1154.7 413.8 L1164.8 413.8 L1174.8 413.8 L1184.9 413.8 L1194.9 413.7 L1205.0 413.5 L1215.1 413.4 L1225.1 413.2 L1235.2 413.0 L1245.2 412.9 L1255.3 412.7 L1265.4 412.5 L1275.4 412.4 L1285.5 412.1 L1295.5 411.9 L1305.6 411.7 L1315.7 411.5 L1325.7 411.4 L1335.8 411.3 L1345.8 411.4 L1355.9 411.7 L1366.0 412.1 L1376.0 412.6 L1386.1 413.1 L1396.1 413.7 L1406.2 414.2 L1416.3 414.7 L1426.3 415.0 L1436.9 415.2 L1448.3 415.3 L1460.0 415.3 L1471.6 415.2 L1482.5 415.2 L1492.3 415.1 L1500.6 415.0 L1506.8 415.0" fill="none" stroke="#0f8a0f" stroke-width="4.2" stroke-linejoin="miter"/>
<path d="M702.0 408.5 L782.5 432.6 L788.7 430.6 L796.9 427.9 L806.8 424.6 L817.7 421.0 L829.2 417.3 L841.0 413.7 L852.3 410.3 L863.0 407.4 L873.0 404.9 L883.1 402.5 L893.1 400.4 L903.2 398.3 L913.3 396.3 L923.3 394.4 L933.4 392.5 L943.4 390.6 L953.5 388.6 L963.6 386.6 L973.6 384.6 L983.7 382.7 L993.7 380.8 L1003.8 379.1 L1013.9 377.4 L1023.9 376.0 L1034.0 374.7 L1044.0 373.5 L1054.1 372.5 L1064.2 371.5 L1074.2 370.7 L1084.3 369.9 L1094.3 369.3 L1104.4 368.7 L1114.5 368.2 L1124.5 367.8 L1134.6 367.6 L1144.6 367.4 L1154.7 367.3 L1164.8 367.2 L1174.8 367.1 L1184.9 367.0 L1194.9 366.9 L1205.0 366.9 L1215.1 366.8 L1225.1 366.8 L1235.2 366.8 L1245.2 366.9 L1255.3 366.9 L1265.4 367.0 L1275.4 367.1 L1285.5 367.2 L1295.5 367.3 L1305.6 367.4 L1315.7 367.6 L1325.7 367.8 L1335.8 368.2 L1345.8 368.7 L1355.9 369.3 L1366.0 369.9 L1376.0 370.6 L1386.1 371.5 L1396.1 372.4 L1406.2 373.4 L1416.3 374.6 L1426.3 376.0 L1436.9 377.6 L1448.3 379.7 L1460.0 381.9 L1471.6 384.3 L1482.5 386.6 L1492.3 388.7 L1500.6 390.4 L1506.8 391.7" fill="none" stroke="#1a1aff" stroke-width="4.2" stroke-linejoin="miter"/>
</g></svg>
<text x="1909.8" y="190.5" font-size="21.22" fill="#dedede" text-anchor="start" textLength="154.0" lengthAdjust="spacingAndGlyphs">Gamma Log/Log</text>
<rect x="1599.8" y="197.0" width="810.3999999999999" height="448.0" fill="#222222"/>
<rect x="1599.8" y="640.3" width="810.3999999999999" height="2" fill="#9c9c9c"/>
<rect x="1591" y="640.3" width="9" height="2" fill="#d0d0d0"/>
<text x="1579.7" y="648.6" font-size="21.22" fill="#dedede" text-anchor="start" textLength="10.8" lengthAdjust="spacingAndGlyphs">1</text>
<rect x="1599.8" y="583.4" width="810.3999999999999" height="2" fill="#9c9c9c"/>
<rect x="1591" y="583.4" width="9" height="2" fill="#d0d0d0"/>
<text x="1563.6" y="591.7" font-size="21.22" fill="#dedede" text-anchor="start" textLength="26.9" lengthAdjust="spacingAndGlyphs">1,2</text>
<rect x="1599.8" y="527.2" width="810.3999999999999" height="2" fill="#9c9c9c"/>
<rect x="1591" y="527.2" width="9" height="2" fill="#d0d0d0"/>
<text x="1563.6" y="535.5" font-size="21.22" fill="#dedede" text-anchor="start" textLength="26.9" lengthAdjust="spacingAndGlyphs">1,4</text>
<rect x="1599.8" y="471.0" width="810.3999999999999" height="2" fill="#9c9c9c"/>
<rect x="1591" y="471.0" width="9" height="2" fill="#d0d0d0"/>
<text x="1563.6" y="479.3" font-size="21.22" fill="#dedede" text-anchor="start" textLength="26.9" lengthAdjust="spacingAndGlyphs">1,6</text>
<rect x="1599.8" y="414.8" width="810.3999999999999" height="2" fill="#9c9c9c"/>
<rect x="1591" y="414.8" width="9" height="2" fill="#d0d0d0"/>
<text x="1563.6" y="423.1" font-size="21.22" fill="#dedede" text-anchor="start" textLength="26.9" lengthAdjust="spacingAndGlyphs">1,8</text>
<rect x="1599.8" y="358.6" width="810.3999999999999" height="2" fill="#9c9c9c"/>
<rect x="1591" y="358.6" width="9" height="2" fill="#d0d0d0"/>
<text x="1579.7" y="366.9" font-size="21.22" fill="#dedede" text-anchor="start" textLength="10.8" lengthAdjust="spacingAndGlyphs">2</text>
<rect x="1599.8" y="303.1" width="810.3999999999999" height="2" fill="#9c9c9c"/>
<rect x="1591" y="303.1" width="9" height="2" fill="#d0d0d0"/>
<text x="1563.6" y="311.4" font-size="21.22" fill="#dedede" text-anchor="start" textLength="26.9" lengthAdjust="spacingAndGlyphs">2,2</text>
<rect x="1599.8" y="247.9" width="810.3999999999999" height="2" fill="#9c9c9c"/>
<rect x="1591" y="247.9" width="9" height="2" fill="#d0d0d0"/>
<text x="1563.6" y="256.2" font-size="21.22" fill="#dedede" text-anchor="start" textLength="26.9" lengthAdjust="spacingAndGlyphs">2,4</text>
<rect x="1599.8" y="197.0" width="810.3999999999999" height="448.0" fill="none" stroke="#9c9c9c" stroke-width="2.2"/>
<rect x="1598.8" y="645" width="2" height="8.5" fill="#d0d0d0"/>
<text x="1599.8" y="676.8" font-size="21.22" fill="#dedede" text-anchor="middle" textLength="10.8" lengthAdjust="spacingAndGlyphs">0</text>
<rect x="1679.8" y="645" width="2" height="8.5" fill="#d0d0d0"/>
<text x="1680.8" y="676.8" font-size="21.22" fill="#dedede" text-anchor="middle" textLength="21.5" lengthAdjust="spacingAndGlyphs">10</text>
<rect x="1760.9" y="645" width="2" height="8.5" fill="#d0d0d0"/>
<text x="1761.9" y="676.8" font-size="21.22" fill="#dedede" text-anchor="middle" textLength="21.5" lengthAdjust="spacingAndGlyphs">20</text>
<rect x="1841.9" y="645" width="2" height="8.5" fill="#d0d0d0"/>
<text x="1842.9" y="676.8" font-size="21.22" fill="#dedede" text-anchor="middle" textLength="21.5" lengthAdjust="spacingAndGlyphs">30</text>
<rect x="1923.0" y="645" width="2" height="8.5" fill="#d0d0d0"/>
<text x="1924.0" y="676.8" font-size="21.22" fill="#dedede" text-anchor="middle" textLength="21.5" lengthAdjust="spacingAndGlyphs">40</text>
<rect x="2004.0" y="645" width="2" height="8.5" fill="#d0d0d0"/>
<text x="2005.0" y="676.8" font-size="21.22" fill="#dedede" text-anchor="middle" textLength="21.5" lengthAdjust="spacingAndGlyphs">50</text>
<rect x="2085.0" y="645" width="2" height="8.5" fill="#d0d0d0"/>
<text x="2086.0" y="676.8" font-size="21.22" fill="#dedede" text-anchor="middle" textLength="21.5" lengthAdjust="spacingAndGlyphs">60</text>
<rect x="2166.1" y="645" width="2" height="8.5" fill="#d0d0d0"/>
<text x="2167.1" y="676.8" font-size="21.22" fill="#dedede" text-anchor="middle" textLength="21.5" lengthAdjust="spacingAndGlyphs">70</text>
<rect x="2247.1" y="645" width="2" height="8.5" fill="#d0d0d0"/>
<text x="2248.1" y="676.8" font-size="21.22" fill="#dedede" text-anchor="middle" textLength="21.5" lengthAdjust="spacingAndGlyphs">80</text>
<rect x="2328.2" y="645" width="2" height="8.5" fill="#d0d0d0"/>
<text x="2329.2" y="676.8" font-size="21.22" fill="#dedede" text-anchor="middle" textLength="21.5" lengthAdjust="spacingAndGlyphs">90</text>
<rect x="2409.2" y="645" width="2" height="8.5" fill="#d0d0d0"/>
<text x="2410.2" y="676.8" font-size="21.22" fill="#dedede" text-anchor="middle" textLength="32.3" lengthAdjust="spacingAndGlyphs">100</text>
<svg x="1599.8" y="197.0" width="810.3999999999999" height="448.0" overflow="hidden"><g transform="translate(-1599.8,-197.0)">
<path d="M1598.7 560.4 L1680.2 313.7 L1764.0 307.2 L1843.0 305.3 L1924.0 303.3 L2005.0 307.3 L2086.0 304.9 L2167.0 304.9 L2248.0 307.3 L2329.0 298.6 L2410.0 280.7" fill="none" stroke="#8c8c8c" stroke-width="3.6" stroke-linejoin="round"/>
<path d="M1598.7 558.3 L1606.3 475.7 L1608.5 470.1 L1611.6 461.9 L1615.1 453.1 L1618.3 445.2 L1621.2 438.6 L1624.0 432.4 L1626.7 426.7 L1629.1 421.3 L1631.0 416.7 L1632.4 412.7 L1634.1 408.7 L1636.7 403.9 L1640.5 397.8 L1645.1 391.0 L1650.1 384.1 L1655.2 377.8 L1660.1 372.4 L1665.1 367.5 L1670.6 362.9 L1677.0 358.3 L1684.9 353.7 L1693.8 349.1 L1703.0 344.8 L1711.7 340.9 L1719.7 337.4 L1727.4 334.3 L1734.8 331.5 L1742.2 328.9 L1749.0 326.7 L1755.3 324.9 L1762.1 323.2 L1770.4 321.3 L1780.7 319.1 L1792.3 316.9 L1804.7 314.6 L1817.1 312.4 L1829.5 310.3 L1842.3 308.2 L1855.3 306.3 L1868.6 304.5 L1881.6 303.0 L1894.6 301.8 L1908.4 300.6 L1924.0 299.4 L1942.0 298.0 L1961.9 296.6 L1982.6 295.1 L2003.2 293.8 L2023.8 292.6 L2044.8 291.5 L2065.7 290.4 L2086.3 289.5 L2106.3 288.7 L2125.9 288.0 L2145.5 287.4 L2165.5 286.7 L2186.0 286.0 L2206.8 285.3 L2227.7 284.6 L2248.6 283.9 L2269.5 283.3 L2290.4 282.6 L2311.2 282.0 L2331.8 281.5 L2353.9 281.0 L2377.1 280.6 L2397.7 280.2 L2412.0 280.0" fill="none" stroke="#f5f500" stroke-width="4.8" stroke-linejoin="round"/>
</g></svg>
<text x="222.2" y="735.9" font-size="44.19" fill="#f2f2f2" text-anchor="start" textLength="306.0" lengthAdjust="spacingAndGlyphs" stroke="#f2f2f2" stroke-width="0.6">Avg dE2000: 4,7</text>
<text x="803.6" y="735.9" font-size="43.90" fill="#f2f2f2" text-anchor="start" textLength="268.0" lengthAdjust="spacingAndGlyphs" stroke="#f2f2f2" stroke-width="0.6">Avg CCT: 7507</text>
<text x="1334.4" y="736.1" font-size="43.31" fill="#f2f2f2" text-anchor="start" textLength="389.5" lengthAdjust="spacingAndGlyphs" stroke="#f2f2f2" stroke-width="0.6">Contrast Ratio: 1600</text>
<text x="1940.8" y="735.6" font-size="43.60" fill="#f2f2f2" text-anchor="start" textLength="360.0" lengthAdjust="spacingAndGlyphs" stroke="#f2f2f2" stroke-width="0.6">Total Gamma: 2,18</text>
<rect x="102" y="763.6" width="2355.5" height="185" fill="#000000"/>
<rect x="476.8" y="771.6" width="140" height="145" fill="#000000"/>
<rect x="476.8" y="771.6" width="140" height="71.4" fill="#030305" shape-rendering="crispEdges"/>
<rect x="477.8" y="772.6" width="138" height="143.2" fill="none" stroke="#f0f0f0" stroke-width="2"/>
<text x="546.8" y="936.8" font-size="18.31" fill="#f0f0f0" text-anchor="middle" textLength="9.3" lengthAdjust="spacingAndGlyphs">0</text>
<rect x="639.4" y="771.6" width="140" height="145" fill="#1c1c1c"/>
<rect x="639.4" y="771.6" width="140" height="71.4" fill="#16161b" shape-rendering="crispEdges"/>
<rect x="640.4" y="772.6" width="138" height="143.2" fill="none" stroke="#f0f0f0" stroke-width="2"/>
<text x="709.4" y="936.8" font-size="18.31" fill="#f0f0f0" text-anchor="middle" textLength="18.7" lengthAdjust="spacingAndGlyphs">10</text>
<rect x="802.1" y="771.6" width="140" height="145" fill="#333333"/>
<rect x="802.1" y="771.6" width="140" height="71.4" fill="#2f2f36" shape-rendering="crispEdges"/>
<rect x="803.1" y="772.6" width="138" height="143.2" fill="none" stroke="#f0f0f0" stroke-width="2"/>
<text x="872.1" y="936.8" font-size="18.31" fill="#f0f0f0" text-anchor="middle" textLength="18.7" lengthAdjust="spacingAndGlyphs">20</text>
<rect x="964.7" y="771.6" width="140" height="145" fill="#4d4d4d"/>
<rect x="964.7" y="771.6" width="140" height="71.4" fill="#4a4a54" shape-rendering="crispEdges"/>
<rect x="965.7" y="772.6" width="138" height="143.2" fill="none" stroke="#f0f0f0" stroke-width="2"/>
<text x="1034.7" y="936.8" font-size="18.31" fill="#f0f0f0" text-anchor="middle" textLength="18.7" lengthAdjust="spacingAndGlyphs">30</text>
<rect x="1127.3" y="771.6" width="140" height="145" fill="#676767"/>
<rect x="1127.3" y="771.6" width="140" height="71.4" fill="#65656f" shape-rendering="crispEdges"/>
<rect x="1128.3" y="772.6" width="138" height="143.2" fill="none" stroke="#f0f0f0" stroke-width="2"/>
<text x="1197.3" y="936.8" font-size="18.31" fill="#f0f0f0" text-anchor="middle" textLength="18.7" lengthAdjust="spacingAndGlyphs">40</text>
<rect x="1290.0" y="771.6" width="140" height="145" fill="#808080"/>
<rect x="1290.0" y="771.6" width="140" height="71.4" fill="#7e818b" shape-rendering="crispEdges"/>
<rect x="1291.0" y="772.6" width="138" height="143.2" fill="none" stroke="#f0f0f0" stroke-width="2"/>
<text x="1360.0" y="936.8" font-size="18.31" fill="#f0f0f0" text-anchor="middle" textLength="18.7" lengthAdjust="spacingAndGlyphs">50</text>
<rect x="1452.6" y="771.6" width="140" height="145" fill="#999999"/>
<rect x="1452.6" y="771.6" width="140" height="71.4" fill="#979aa5" shape-rendering="crispEdges"/>
<rect x="1453.6" y="772.6" width="138" height="143.2" fill="none" stroke="#f0f0f0" stroke-width="2"/>
<text x="1522.6" y="936.8" font-size="18.31" fill="#f0f0f0" text-anchor="middle" textLength="18.7" lengthAdjust="spacingAndGlyphs">60</text>
<rect x="1615.2" y="771.6" width="140" height="145" fill="#b3b3b3"/>
<rect x="1615.2" y="771.6" width="140" height="71.4" fill="#adb2bd" shape-rendering="crispEdges"/>
<rect x="1616.2" y="772.6" width="138" height="143.2" fill="none" stroke="#f0f0f0" stroke-width="2"/>
<text x="1685.2" y="936.8" font-size="18.31" fill="#f0f0f0" text-anchor="middle" textLength="18.7" lengthAdjust="spacingAndGlyphs">70</text>
<rect x="1777.8" y="771.6" width="140" height="145" fill="#cccccc"/>
<rect x="1777.8" y="771.6" width="140" height="71.4" fill="#c6ccd7" shape-rendering="crispEdges"/>
<rect x="1778.8" y="772.6" width="138" height="143.2" fill="none" stroke="#f0f0f0" stroke-width="2"/>
<text x="1847.8" y="936.8" font-size="18.31" fill="#f0f0f0" text-anchor="middle" textLength="18.7" lengthAdjust="spacingAndGlyphs">80</text>
<rect x="1940.5" y="771.6" width="140" height="145" fill="#e5e5e5"/>
<rect x="1940.5" y="771.6" width="140" height="71.4" fill="#dee5ee" shape-rendering="crispEdges"/>
<rect x="1941.5" y="772.6" width="138" height="143.2" fill="none" stroke="#f0f0f0" stroke-width="2"/>
<text x="2010.5" y="936.8" font-size="18.31" fill="#f0f0f0" text-anchor="middle" textLength="18.7" lengthAdjust="spacingAndGlyphs">90</text>
<rect x="2103.1" y="771.6" width="140" height="145" fill="#f7f7f7"/>
<rect x="2103.1" y="771.6" width="140" height="71.4" fill="#eff7fe" shape-rendering="crispEdges"/>
<rect x="2104.1" y="772.6" width="138" height="143.2" fill="none" stroke="#f0f0f0" stroke-width="2"/>
<text x="2173.1" y="936.8" font-size="18.31" fill="#f0f0f0" text-anchor="middle" textLength="28.0" lengthAdjust="spacingAndGlyphs">100</text>
<g transform="translate(467 827.6) rotate(-90)"><text x="0.0" y="0.0" font-size="17.88" fill="#f0f0f0" text-anchor="start" textLength="47.6" lengthAdjust="spacingAndGlyphs">Actual</text></g>
<g transform="translate(467 908.3) rotate(-90)"><text x="0.0" y="0.0" font-size="17.88" fill="#f0f0f0" text-anchor="start" textLength="47.4" lengthAdjust="spacingAndGlyphs">Target</text></g>
<text x="122.3" y="1023.7" font-size="42.73" fill="#f2f2f2" text-anchor="start" textLength="309.0" lengthAdjust="spacingAndGlyphs" stroke="#f2f2f2" stroke-width="0.5">Current Reading</text>
<text x="121.5" y="1083.7" font-size="35.90" fill="#f2f2f2" text-anchor="start" textLength="145.0" lengthAdjust="spacingAndGlyphs" stroke="#f2f2f2" stroke-width="0.5">x: 0,3037</text>
<text x="121.5" y="1141.8" font-size="35.90" fill="#f2f2f2" text-anchor="start" textLength="146.0" lengthAdjust="spacingAndGlyphs" stroke="#f2f2f2" stroke-width="0.5">y: 0,3231</text>
<text x="121.5" y="1198.3" font-size="35.90" fill="#f2f2f2" text-anchor="start" textLength="157.0" lengthAdjust="spacingAndGlyphs" stroke="#f2f2f2" stroke-width="0.5">fL: 157,75</text>
<text x="121.5" y="1256.6" font-size="35.90" fill="#f2f2f2" text-anchor="start" textLength="225.0" lengthAdjust="spacingAndGlyphs" stroke="#f2f2f2" stroke-width="0.5">cd/m²: 540,48</text>
<rect x="564.1" y="979.1" width="412.5" height="301.8" fill="#e2e2e2"/>
<rect x="573.2" y="989.2" width="394.2" height="287.6" fill="#2f2f2f"/>
<g><rect x="626.7" y="993.3" width="336.9" height="243.70000000000005" fill="url(#gRow4)"/><rect x="626.7" y="993.3" width="336.9" height="243.70000000000005" fill="url(#gRow3)" mask="url(#mk3)"/><rect x="626.7" y="993.3" width="336.9" height="243.70000000000005" fill="url(#gRow2)" mask="url(#mk2)"/><rect x="626.7" y="993.3" width="336.9" height="243.70000000000005" fill="url(#gRow1)" mask="url(#mk1)"/><rect x="626.7" y="993.3" width="336.9" height="243.70000000000005" fill="url(#gRow0)" mask="url(#mk0)"/></g>
<rect x="625.7" y="992.3" width="338.9" height="245.70000000000005" fill="none" stroke="#9a9a9a" stroke-width="2.2"/>
<rect x="618.5" y="1012.2" width="8" height="1.6" fill="#d0d0d0"/>
<text x="577.3" y="1019.8" font-size="19.19" fill="#dcdcdc" text-anchor="start" textLength="39.5" lengthAdjust="spacingAndGlyphs">0,35</text>
<rect x="618.5" y="1062.3" width="8" height="1.6" fill="#d0d0d0"/>
<text x="577.3" y="1069.9" font-size="19.19" fill="#dcdcdc" text-anchor="start" textLength="39.5" lengthAdjust="spacingAndGlyphs">0,34</text>
<rect x="618.5" y="1110.3" width="8" height="1.6" fill="#d0d0d0"/>
<text x="577.3" y="1117.9" font-size="19.19" fill="#dcdcdc" text-anchor="start" textLength="39.5" lengthAdjust="spacingAndGlyphs">0,33</text>
<rect x="618.5" y="1158.7" width="8" height="1.6" fill="#d0d0d0"/>
<text x="577.3" y="1166.3" font-size="19.19" fill="#dcdcdc" text-anchor="start" textLength="39.5" lengthAdjust="spacingAndGlyphs">0,32</text>
<rect x="618.5" y="1206.4" width="8" height="1.6" fill="#d0d0d0"/>
<text x="577.3" y="1214.0" font-size="19.19" fill="#dcdcdc" text-anchor="start" textLength="39.5" lengthAdjust="spacingAndGlyphs">0,31</text>
<rect x="639.1" y="1237" width="2" height="8.5" fill="#d0d0d0"/>
<text x="640.1" y="1265.4" font-size="19.77" fill="#dcdcdc" text-anchor="middle" textLength="39.5" lengthAdjust="spacingAndGlyphs">0,29</text>
<rect x="706.2" y="1237" width="2" height="8.5" fill="#d0d0d0"/>
<text x="707.2" y="1265.4" font-size="19.77" fill="#dcdcdc" text-anchor="middle" textLength="29.0" lengthAdjust="spacingAndGlyphs">0,3</text>
<rect x="774.0" y="1237" width="2" height="8.5" fill="#d0d0d0"/>
<text x="775.0" y="1265.4" font-size="19.77" fill="#dcdcdc" text-anchor="middle" textLength="39.5" lengthAdjust="spacingAndGlyphs">0,31</text>
<rect x="841.1" y="1237" width="2" height="8.5" fill="#d0d0d0"/>
<text x="842.1" y="1265.4" font-size="19.77" fill="#dcdcdc" text-anchor="middle" textLength="39.5" lengthAdjust="spacingAndGlyphs">0,32</text>
<rect x="908.2" y="1237" width="2" height="8.5" fill="#d0d0d0"/>
<text x="909.2" y="1265.4" font-size="19.77" fill="#dcdcdc" text-anchor="middle" textLength="39.5" lengthAdjust="spacingAndGlyphs">0,33</text>
<svg x="626.7" y="993.3" width="336.9" height="243.70000000000005" overflow="hidden"><g transform="translate(-626.7,-993.3)">
<path d="M674 1230 L963.6 1033.9" stroke="#000" stroke-width="4"/>
<rect x="784.5" y="1105.4" width="18.2" height="18" fill="none" stroke="#000" stroke-width="2.2"/>
<circle cx="674" cy="1229.8" r="5.9" fill="#252525" stroke="#111" stroke-width="1.4"/>
<circle cx="697.6" cy="1214.6" r="5.9" fill="#3c3c3c" stroke="#111" stroke-width="1.4"/>
<circle cx="702.1" cy="1211.3" r="5.9" fill="#555555" stroke="#111" stroke-width="1.4"/>
<circle cx="704.9" cy="1205.7" r="5.9" fill="#6e6e6e" stroke="#111" stroke-width="1.4"/>
<circle cx="707.2" cy="1196.1" r="5.9" fill="#8c8c8c" stroke="#111" stroke-width="1.4"/>
<circle cx="708.8" cy="1186" r="5.9" fill="#a8a8a8" stroke="#111" stroke-width="1.4"/>
<circle cx="712.8" cy="1175.9" r="5.9" fill="#c4c4c4" stroke="#111" stroke-width="1.4"/>
<circle cx="719" cy="1164.1" r="5.9" fill="#e2e2e2" stroke="#111" stroke-width="1.4"/>
<circle cx="732.4" cy="1143.3" r="5.6" fill="#ffffff" stroke="#111" stroke-width="1.4"/>
</g></svg>
<rect x="986.4" y="960.5" width="1235.2999999999997" height="297" fill="#101010"/>
<rect x="988.4" y="962" width="1231.2999999999997" height="20" fill="#2d2d2d"/>
<rect x="988.4" y="982" width="1231.2999999999997" height="19.6" fill="#141414"/>
<text x="1255.3" y="989.5" font-size="20.35" fill="#f0f0f0" text-anchor="middle" textLength="10.5" lengthAdjust="spacingAndGlyphs">0</text>
<text x="1353.2" y="989.5" font-size="20.35" fill="#f0f0f0" text-anchor="middle" textLength="20.9" lengthAdjust="spacingAndGlyphs">10</text>
<text x="1444.3" y="989.5" font-size="20.35" fill="#f0f0f0" text-anchor="middle" textLength="20.9" lengthAdjust="spacingAndGlyphs">20</text>
<text x="1535.5" y="989.5" font-size="20.35" fill="#f0f0f0" text-anchor="middle" textLength="20.9" lengthAdjust="spacingAndGlyphs">30</text>
<text x="1626.6" y="989.5" font-size="20.35" fill="#f0f0f0" text-anchor="middle" textLength="20.9" lengthAdjust="spacingAndGlyphs">40</text>
<text x="1717.8" y="989.5" font-size="20.35" fill="#f0f0f0" text-anchor="middle" textLength="20.9" lengthAdjust="spacingAndGlyphs">50</text>
<text x="1808.9" y="989.5" font-size="20.35" fill="#f0f0f0" text-anchor="middle" textLength="20.9" lengthAdjust="spacingAndGlyphs">60</text>
<text x="1900.0" y="989.5" font-size="20.35" fill="#f0f0f0" text-anchor="middle" textLength="20.9" lengthAdjust="spacingAndGlyphs">70</text>
<text x="1991.2" y="989.5" font-size="20.35" fill="#f0f0f0" text-anchor="middle" textLength="20.9" lengthAdjust="spacingAndGlyphs">80</text>
<text x="2082.3" y="989.5" font-size="20.35" fill="#f0f0f0" text-anchor="middle" textLength="20.9" lengthAdjust="spacingAndGlyphs">90</text>
<text x="2173.5" y="989.5" font-size="20.35" fill="#f0f0f0" text-anchor="middle" textLength="31.4" lengthAdjust="spacingAndGlyphs">100</text>
<rect x="988.4" y="1001.6" width="1231.2999999999997" height="36.4" fill="#404040"/>
<text x="1005.7" y="1028.2" font-size="22.97" fill="#f4f4f4" text-anchor="start" font-weight="bold" textLength="84.0" lengthAdjust="spacingAndGlyphs">x: CIE31</text>
<text x="1210.0" y="1028.2" font-size="22.97" fill="#f0f0f0" text-anchor="start" textLength="41.2" lengthAdjust="spacingAndGlyphs">0,25</text>
<text x="1313.9" y="1028.2" font-size="22.97" fill="#f0f0f0" text-anchor="start" textLength="41.2" lengthAdjust="spacingAndGlyphs">0,30</text>
<text x="1405.0" y="1028.2" font-size="22.97" fill="#f0f0f0" text-anchor="start" textLength="41.2" lengthAdjust="spacingAndGlyphs">0,30</text>
<text x="1496.2" y="1028.2" font-size="22.97" fill="#f0f0f0" text-anchor="start" textLength="41.2" lengthAdjust="spacingAndGlyphs">0,30</text>
<text x="1587.3" y="1028.2" font-size="22.97" fill="#f0f0f0" text-anchor="start" textLength="41.2" lengthAdjust="spacingAndGlyphs">0,30</text>
<text x="1678.5" y="1028.2" font-size="22.97" fill="#f0f0f0" text-anchor="start" textLength="41.2" lengthAdjust="spacingAndGlyphs">0,30</text>
<text x="1769.6" y="1028.2" font-size="22.97" fill="#f0f0f0" text-anchor="start" textLength="41.2" lengthAdjust="spacingAndGlyphs">0,30</text>
<text x="1860.7" y="1028.2" font-size="22.97" fill="#f0f0f0" text-anchor="start" textLength="41.2" lengthAdjust="spacingAndGlyphs">0,30</text>
<text x="1951.9" y="1028.2" font-size="22.97" fill="#f0f0f0" text-anchor="start" textLength="41.2" lengthAdjust="spacingAndGlyphs">0,30</text>
<text x="2043.0" y="1028.2" font-size="22.97" fill="#f0f0f0" text-anchor="start" textLength="41.2" lengthAdjust="spacingAndGlyphs">0,30</text>
<text x="2134.2" y="1028.2" font-size="22.97" fill="#f0f0f0" text-anchor="start" textLength="41.2" lengthAdjust="spacingAndGlyphs">0,30</text>
<rect x="988.4" y="1038.0" width="1231.2999999999997" height="37.0" fill="#7f7f7f"/>
<text x="1005.7" y="1064.6" font-size="22.97" fill="#f4f4f4" text-anchor="start" font-weight="bold" textLength="84.0" lengthAdjust="spacingAndGlyphs">y: CIE31</text>
<text x="1210.0" y="1064.6" font-size="22.97" fill="#f0f0f0" text-anchor="start" textLength="41.2" lengthAdjust="spacingAndGlyphs">0,25</text>
<text x="1313.9" y="1064.6" font-size="22.97" fill="#f0f0f0" text-anchor="start" textLength="41.2" lengthAdjust="spacingAndGlyphs">0,30</text>
<text x="1405.0" y="1064.6" font-size="22.97" fill="#f0f0f0" text-anchor="start" textLength="41.2" lengthAdjust="spacingAndGlyphs">0,31</text>
<text x="1496.2" y="1064.6" font-size="22.97" fill="#f0f0f0" text-anchor="start" textLength="41.2" lengthAdjust="spacingAndGlyphs">0,31</text>
<text x="1587.3" y="1064.6" font-size="22.97" fill="#f0f0f0" text-anchor="start" textLength="41.2" lengthAdjust="spacingAndGlyphs">0,31</text>
<text x="1678.5" y="1064.6" font-size="22.97" fill="#f0f0f0" text-anchor="start" textLength="41.2" lengthAdjust="spacingAndGlyphs">0,31</text>
<text x="1769.6" y="1064.6" font-size="22.97" fill="#f0f0f0" text-anchor="start" textLength="41.2" lengthAdjust="spacingAndGlyphs">0,31</text>
<text x="1860.7" y="1064.6" font-size="22.97" fill="#f0f0f0" text-anchor="start" textLength="41.2" lengthAdjust="spacingAndGlyphs">0,31</text>
<text x="1951.9" y="1064.6" font-size="22.97" fill="#f0f0f0" text-anchor="start" textLength="41.2" lengthAdjust="spacingAndGlyphs">0,32</text>
<text x="2043.0" y="1064.6" font-size="22.97" fill="#f0f0f0" text-anchor="start" textLength="41.2" lengthAdjust="spacingAndGlyphs">0,32</text>
<text x="2134.2" y="1064.6" font-size="22.97" fill="#f0f0f0" text-anchor="start" textLength="41.2" lengthAdjust="spacingAndGlyphs">0,32</text>
<rect x="988.4" y="1075.0" width="1231.2999999999997" height="35.7" fill="#404040"/>
<text x="1005.7" y="1101.6" font-size="22.97" fill="#f4f4f4" text-anchor="start" font-weight="bold" textLength="13.0" lengthAdjust="spacingAndGlyphs">Y</text>
<text x="1210.0" y="1101.6" font-size="22.97" fill="#f0f0f0" text-anchor="start" textLength="41.2" lengthAdjust="spacingAndGlyphs">0,34</text>
<text x="1313.9" y="1101.6" font-size="22.97" fill="#f0f0f0" text-anchor="start" textLength="41.2" lengthAdjust="spacingAndGlyphs">3,93</text>
<text x="1405.0" y="1101.6" font-size="22.97" fill="#f0f0f0" text-anchor="start" textLength="53.0" lengthAdjust="spacingAndGlyphs">16,25</text>
<text x="1496.2" y="1101.6" font-size="22.97" fill="#f0f0f0" text-anchor="start" textLength="53.0" lengthAdjust="spacingAndGlyphs">38,48</text>
<text x="1587.3" y="1101.6" font-size="22.97" fill="#f0f0f0" text-anchor="start" textLength="53.0" lengthAdjust="spacingAndGlyphs">73,16</text>
<text x="1678.5" y="1101.6" font-size="22.97" fill="#f0f0f0" text-anchor="start" textLength="64.8" lengthAdjust="spacingAndGlyphs">120,40</text>
<text x="1769.6" y="1101.6" font-size="22.97" fill="#f0f0f0" text-anchor="start" textLength="64.8" lengthAdjust="spacingAndGlyphs">176,84</text>
<text x="1860.7" y="1101.6" font-size="22.97" fill="#f0f0f0" text-anchor="start" textLength="64.8" lengthAdjust="spacingAndGlyphs">246,16</text>
<text x="1951.9" y="1101.6" font-size="22.97" fill="#f0f0f0" text-anchor="start" textLength="64.8" lengthAdjust="spacingAndGlyphs">332,33</text>
<text x="2043.0" y="1101.6" font-size="22.97" fill="#f0f0f0" text-anchor="start" textLength="64.8" lengthAdjust="spacingAndGlyphs">430,24</text>
<text x="2134.2" y="1101.6" font-size="22.97" fill="#f0f0f0" text-anchor="start" textLength="64.8" lengthAdjust="spacingAndGlyphs">540,48</text>
<rect x="988.4" y="1110.7" width="1231.2999999999997" height="37.3" fill="#7f7f7f"/>
<text x="1005.7" y="1137.3" font-size="22.97" fill="#f4f4f4" text-anchor="start" font-weight="bold" textLength="89.0" lengthAdjust="spacingAndGlyphs">Target Y</text>
<text x="1210.0" y="1137.3" font-size="22.97" fill="#f0f0f0" text-anchor="start" textLength="41.2" lengthAdjust="spacingAndGlyphs">0,00</text>
<text x="1313.9" y="1137.3" font-size="22.97" fill="#f0f0f0" text-anchor="start" textLength="41.2" lengthAdjust="spacingAndGlyphs">5,58</text>
<text x="1405.0" y="1137.3" font-size="22.97" fill="#f0f0f0" text-anchor="start" textLength="53.0" lengthAdjust="spacingAndGlyphs">17,89</text>
<text x="1496.2" y="1137.3" font-size="22.97" fill="#f0f0f0" text-anchor="start" textLength="53.0" lengthAdjust="spacingAndGlyphs">39,06</text>
<text x="1587.3" y="1137.3" font-size="22.97" fill="#f0f0f0" text-anchor="start" textLength="53.0" lengthAdjust="spacingAndGlyphs">71,81</text>
<text x="1678.5" y="1137.3" font-size="22.97" fill="#f0f0f0" text-anchor="start" textLength="64.8" lengthAdjust="spacingAndGlyphs">116,67</text>
<text x="1769.6" y="1137.3" font-size="22.97" fill="#f0f0f0" text-anchor="start" textLength="64.8" lengthAdjust="spacingAndGlyphs">172,17</text>
<text x="1860.7" y="1137.3" font-size="22.97" fill="#f0f0f0" text-anchor="start" textLength="64.8" lengthAdjust="spacingAndGlyphs">240,62</text>
<text x="1951.9" y="1137.3" font-size="22.97" fill="#f0f0f0" text-anchor="start" textLength="64.8" lengthAdjust="spacingAndGlyphs">326,36</text>
<text x="2043.0" y="1137.3" font-size="22.97" fill="#f0f0f0" text-anchor="start" textLength="64.8" lengthAdjust="spacingAndGlyphs">427,68</text>
<text x="2134.2" y="1137.3" font-size="22.97" fill="#f0f0f0" text-anchor="start" textLength="64.8" lengthAdjust="spacingAndGlyphs">540,48</text>
<rect x="988.4" y="1148.0" width="1231.2999999999997" height="35.4" fill="#404040"/>
<text x="1005.7" y="1174.6" font-size="22.97" fill="#f4f4f4" text-anchor="start" font-weight="bold" textLength="179.4" lengthAdjust="spacingAndGlyphs">Gamma Log/Log</text>
<text x="1210.0" y="1174.6" font-size="22.97" fill="#f0f0f0" text-anchor="start" textLength="41.2" lengthAdjust="spacingAndGlyphs">1,28</text>
<text x="1313.9" y="1174.6" font-size="22.97" fill="#f0f0f0" text-anchor="start" textLength="41.2" lengthAdjust="spacingAndGlyphs">2,16</text>
<text x="1405.0" y="1174.6" font-size="22.97" fill="#f0f0f0" text-anchor="start" textLength="41.2" lengthAdjust="spacingAndGlyphs">2,18</text>
<text x="1496.2" y="1174.6" font-size="22.97" fill="#f0f0f0" text-anchor="start" textLength="41.2" lengthAdjust="spacingAndGlyphs">2,18</text>
<text x="1587.3" y="1174.6" font-size="22.97" fill="#f0f0f0" text-anchor="start" textLength="41.2" lengthAdjust="spacingAndGlyphs">2,18</text>
<text x="1678.5" y="1174.6" font-size="22.97" fill="#f0f0f0" text-anchor="start" textLength="41.2" lengthAdjust="spacingAndGlyphs">2,18</text>
<text x="1769.6" y="1174.6" font-size="22.97" fill="#f0f0f0" text-anchor="start" textLength="41.2" lengthAdjust="spacingAndGlyphs">2,19</text>
<text x="1860.7" y="1174.6" font-size="22.97" fill="#f0f0f0" text-anchor="start" textLength="41.2" lengthAdjust="spacingAndGlyphs">2,19</text>
<text x="1951.9" y="1174.6" font-size="22.97" fill="#f0f0f0" text-anchor="start" textLength="41.2" lengthAdjust="spacingAndGlyphs">2,18</text>
<text x="2043.0" y="1174.6" font-size="22.97" fill="#f0f0f0" text-anchor="start" textLength="41.2" lengthAdjust="spacingAndGlyphs">2,21</text>
<text x="2134.2" y="1174.6" font-size="22.97" fill="#f0f0f0" text-anchor="start" textLength="41.2" lengthAdjust="spacingAndGlyphs">2,27</text>
<rect x="988.4" y="1183.4" width="1231.2999999999997" height="36.1" fill="#7f7f7f"/>
<text x="1005.7" y="1210.0" font-size="22.97" fill="#f4f4f4" text-anchor="start" font-weight="bold" textLength="41.0" lengthAdjust="spacingAndGlyphs">CCT</text>
<text x="1210.0" y="1210.0" font-size="22.97" fill="#f0f0f0" text-anchor="start" textLength="88.4" lengthAdjust="spacingAndGlyphs">19766,00</text>
<text x="1313.9" y="1210.0" font-size="22.97" fill="#f0f0f0" text-anchor="start" textLength="76.6" lengthAdjust="spacingAndGlyphs">7988,00</text>
<text x="1405.0" y="1210.0" font-size="22.97" fill="#f0f0f0" text-anchor="start" textLength="76.6" lengthAdjust="spacingAndGlyphs">7658,00</text>
<text x="1496.2" y="1210.0" font-size="22.97" fill="#f0f0f0" text-anchor="start" textLength="76.6" lengthAdjust="spacingAndGlyphs">7614,00</text>
<text x="1587.3" y="1210.0" font-size="22.97" fill="#f0f0f0" text-anchor="start" textLength="76.6" lengthAdjust="spacingAndGlyphs">7590,00</text>
<text x="1678.5" y="1210.0" font-size="22.97" fill="#f0f0f0" text-anchor="start" textLength="76.6" lengthAdjust="spacingAndGlyphs">7551,00</text>
<text x="1769.6" y="1210.0" font-size="22.97" fill="#f0f0f0" text-anchor="start" textLength="76.6" lengthAdjust="spacingAndGlyphs">7501,00</text>
<text x="1860.7" y="1210.0" font-size="22.97" fill="#f0f0f0" text-anchor="start" textLength="76.6" lengthAdjust="spacingAndGlyphs">7439,00</text>
<text x="1951.9" y="1210.0" font-size="22.97" fill="#f0f0f0" text-anchor="start" textLength="76.6" lengthAdjust="spacingAndGlyphs">7367,00</text>
<text x="2043.0" y="1210.0" font-size="22.97" fill="#f0f0f0" text-anchor="start" textLength="76.6" lengthAdjust="spacingAndGlyphs">7278,00</text>
<text x="2134.2" y="1210.0" font-size="22.97" fill="#f0f0f0" text-anchor="start" textLength="76.6" lengthAdjust="spacingAndGlyphs">7080,00</text>
<rect x="988.4" y="1219.5" width="1231.2999999999997" height="37.0" fill="#404040"/>
<text x="1005.7" y="1246.1" font-size="22.97" fill="#f4f4f4" text-anchor="start" font-weight="bold" textLength="88.0" lengthAdjust="spacingAndGlyphs">ΔE 2000</text>
<text x="1210.0" y="1246.1" font-size="22.97" fill="#f0f0f0" text-anchor="start" textLength="41.2" lengthAdjust="spacingAndGlyphs">0,84</text>
<text x="1313.9" y="1246.1" font-size="22.97" fill="#f0f0f0" text-anchor="start" textLength="41.2" lengthAdjust="spacingAndGlyphs">2,84</text>
<text x="1405.0" y="1246.1" font-size="22.97" fill="#f0f0f0" text-anchor="start" textLength="41.2" lengthAdjust="spacingAndGlyphs">3,47</text>
<text x="1496.2" y="1246.1" font-size="22.97" fill="#f0f0f0" text-anchor="start" textLength="41.2" lengthAdjust="spacingAndGlyphs">4,34</text>
<text x="1587.3" y="1246.1" font-size="22.97" fill="#f0f0f0" text-anchor="start" textLength="41.2" lengthAdjust="spacingAndGlyphs">5,09</text>
<text x="1678.5" y="1246.1" font-size="22.97" fill="#f0f0f0" text-anchor="start" textLength="41.2" lengthAdjust="spacingAndGlyphs">5,54</text>
<text x="1769.6" y="1246.1" font-size="22.97" fill="#f0f0f0" text-anchor="start" textLength="41.2" lengthAdjust="spacingAndGlyphs">5,64</text>
<text x="1860.7" y="1246.1" font-size="22.97" fill="#f0f0f0" text-anchor="start" textLength="41.2" lengthAdjust="spacingAndGlyphs">5,58</text>
<text x="1951.9" y="1246.1" font-size="22.97" fill="#f0f0f0" text-anchor="start" textLength="41.2" lengthAdjust="spacingAndGlyphs">5,40</text>
<text x="2043.0" y="1246.1" font-size="22.97" fill="#f0f0f0" text-anchor="start" textLength="41.2" lengthAdjust="spacingAndGlyphs">5,10</text>
<text x="2134.2" y="1246.1" font-size="22.97" fill="#f0f0f0" text-anchor="start" textLength="41.2" lengthAdjust="spacingAndGlyphs">4,35</text>
<rect x="0" y="1286" width="2549" height="94" fill="#262626"/>
<rect x="2.0" y="1287" width="185" height="91" rx="5" fill="url(#gSw)" stroke="#8a8a8a" stroke-width="1"/>
<rect x="9.5" y="1294.8" width="170" height="53.8" rx="5" fill="#000000" stroke="#111" stroke-width="1"/>
<rect x="14.0" y="1295.5" width="161" height="2" rx="1" fill="#000" opacity="0.18"/>
<text x="94.5" y="1372.2" font-size="16.42" fill="#2a2a2a" text-anchor="middle" font-weight="bold" textLength="8.9" lengthAdjust="spacingAndGlyphs">0</text>
<rect x="190.3" y="1287" width="185" height="91" rx="5" fill="url(#gSw)" stroke="#8a8a8a" stroke-width="1"/>
<rect x="197.8" y="1294.8" width="170" height="53.8" rx="5" fill="#1a1a1a" stroke="#111" stroke-width="1"/>
<rect x="202.3" y="1295.5" width="161" height="2" rx="1" fill="#000" opacity="0.18"/>
<text x="282.9" y="1372.2" font-size="16.42" fill="#2a2a2a" text-anchor="middle" font-weight="bold" textLength="17.7" lengthAdjust="spacingAndGlyphs">10</text>
<rect x="378.7" y="1287" width="185" height="91" rx="5" fill="url(#gSw)" stroke="#8a8a8a" stroke-width="1"/>
<rect x="386.2" y="1294.8" width="170" height="53.8" rx="5" fill="#333333" stroke="#6a6a6a" stroke-width="1"/>
<rect x="390.7" y="1295.5" width="161" height="2" rx="1" fill="#000" opacity="0.18"/>
<text x="471.2" y="1372.2" font-size="16.42" fill="#2a2a2a" text-anchor="middle" font-weight="bold" textLength="17.7" lengthAdjust="spacingAndGlyphs">20</text>
<rect x="567.0" y="1287" width="185" height="91" rx="5" fill="url(#gSw)" stroke="#8a8a8a" stroke-width="1"/>
<rect x="574.5" y="1294.8" width="170" height="53.8" rx="5" fill="#4d4d4d" stroke="#6a6a6a" stroke-width="1"/>
<rect x="579.0" y="1295.5" width="161" height="2" rx="1" fill="#000" opacity="0.18"/>
<text x="659.5" y="1372.2" font-size="16.42" fill="#2a2a2a" text-anchor="middle" font-weight="bold" textLength="17.7" lengthAdjust="spacingAndGlyphs">30</text>
<rect x="755.4" y="1287" width="185" height="91" rx="5" fill="url(#gSw)" stroke="#8a8a8a" stroke-width="1"/>
<rect x="762.9" y="1294.8" width="170" height="53.8" rx="5" fill="#666666" stroke="#6a6a6a" stroke-width="1"/>
<rect x="767.4" y="1295.5" width="161" height="2" rx="1" fill="#000" opacity="0.18"/>
<text x="847.9" y="1372.2" font-size="16.42" fill="#2a2a2a" text-anchor="middle" font-weight="bold" textLength="17.7" lengthAdjust="spacingAndGlyphs">40</text>
<rect x="943.8" y="1287" width="185" height="91" rx="5" fill="url(#gSw)" stroke="#8a8a8a" stroke-width="1"/>
<rect x="951.2" y="1294.8" width="170" height="53.8" rx="5" fill="#808080" stroke="#6a6a6a" stroke-width="1"/>
<rect x="955.8" y="1295.5" width="161" height="2" rx="1" fill="#000" opacity="0.18"/>
<text x="1036.2" y="1372.2" font-size="16.42" fill="#2a2a2a" text-anchor="middle" font-weight="bold" textLength="17.7" lengthAdjust="spacingAndGlyphs">50</text>
<rect x="1132.1" y="1287" width="185" height="91" rx="5" fill="url(#gSw)" stroke="#8a8a8a" stroke-width="1"/>
<rect x="1139.6" y="1294.8" width="170" height="53.8" rx="5" fill="#999999" stroke="#6a6a6a" stroke-width="1"/>
<rect x="1144.1" y="1295.5" width="161" height="2" rx="1" fill="#000" opacity="0.18"/>
<text x="1224.6" y="1372.2" font-size="16.42" fill="#2a2a2a" text-anchor="middle" font-weight="bold" textLength="17.7" lengthAdjust="spacingAndGlyphs">60</text>
<rect x="1320.5" y="1287" width="185" height="91" rx="5" fill="url(#gSw)" stroke="#8a8a8a" stroke-width="1"/>
<rect x="1328.0" y="1294.8" width="170" height="53.8" rx="5" fill="#b3b3b3" stroke="#6a6a6a" stroke-width="1"/>
<rect x="1332.5" y="1295.5" width="161" height="2" rx="1" fill="#000" opacity="0.18"/>
<text x="1413.0" y="1372.2" font-size="16.42" fill="#2a2a2a" text-anchor="middle" font-weight="bold" textLength="17.7" lengthAdjust="spacingAndGlyphs">70</text>
<rect x="1508.8" y="1287" width="185" height="91" rx="5" fill="url(#gSw)" stroke="#8a8a8a" stroke-width="1"/>
<rect x="1516.3" y="1294.8" width="170" height="53.8" rx="5" fill="#cccccc" stroke="#6a6a6a" stroke-width="1"/>
<rect x="1520.8" y="1295.5" width="161" height="2" rx="1" fill="#000" opacity="0.18"/>
<text x="1601.3" y="1372.2" font-size="16.42" fill="#2a2a2a" text-anchor="middle" font-weight="bold" textLength="17.7" lengthAdjust="spacingAndGlyphs">80</text>
<rect x="1697.1" y="1287" width="185" height="91" rx="5" fill="url(#gSw)" stroke="#8a8a8a" stroke-width="1"/>
<rect x="1704.6" y="1294.8" width="170" height="53.8" rx="5" fill="#e6e6e6" stroke="#6a6a6a" stroke-width="1"/>
<rect x="1709.1" y="1295.5" width="161" height="2" rx="1" fill="#000" opacity="0.18"/>
<text x="1789.6" y="1372.2" font-size="16.42" fill="#2a2a2a" text-anchor="middle" font-weight="bold" textLength="17.7" lengthAdjust="spacingAndGlyphs">90</text>
<rect x="1885.5" y="1287" width="185" height="91" rx="5" fill="url(#gSwSel)" stroke="#202020" stroke-width="1"/>
<rect x="1893.0" y="1294.8" width="170" height="53.8" rx="5" fill="#ffffff" stroke="#6a6a6a" stroke-width="1"/>
<rect x="1897.5" y="1295.5" width="161" height="2" rx="1" fill="#000" opacity="0.18"/>
<text x="1978.0" y="1372.2" font-size="16.42" fill="#ffffff" text-anchor="middle" font-weight="bold" textLength="26.6" lengthAdjust="spacingAndGlyphs">100</text>
<rect x="2075.5" y="1287" width="72.5" height="91" rx="5" fill="url(#gCtl)"/>
<rect x="2075.5" y="1287" width="72.5" height="27.5" rx="5" fill="#a4a4a4"/>
<rect x="2075.5" y="1313.8" width="72.5" height="1.5" fill="#333"/>
<circle cx="2111" cy="1301" r="11" fill="url(#gCtlC)"/>
<path d="M2105 1303 L2111 1296.8 L2117 1303 Z" fill="#333"/>
<rect x="2089.5" y="1324.5" width="44" height="44" rx="6" fill="#a8a8a8" stroke="#222" stroke-width="2.6"/>
<rect x="2101" y="1337" width="21" height="20.5" fill="#0a0a0a"/>
<rect x="2088" y="1347" width="47" height="23" fill="#000" opacity="0.12"/>
<rect x="2148" y="1287" width="340" height="44.6" fill="url(#gCtl)"/>
<rect x="2488" y="1287" width="61" height="44.6" fill="#2c2c2c"/>
<circle cx="2524" cy="1309" r="15" fill="url(#gDark)"/>
<rect x="2217.5" y="1287" width="1.6" height="44.6" fill="#333"/>
<rect x="2284.8" y="1287" width="1.6" height="44.6" fill="#333"/>
<rect x="2352.7" y="1287" width="1.6" height="44.6" fill="#333"/>
<rect x="2420.2" y="1287" width="1.6" height="44.6" fill="#333"/>
<circle cx="2183.3" cy="1309.5" r="15" fill="url(#gTr)"/>
<circle cx="2251.9" cy="1309.5" r="15" fill="url(#gTr)"/>
<circle cx="2319.5" cy="1309.5" r="15" fill="url(#gTr)"/>
<circle cx="2387.2" cy="1309.5" r="15" fill="url(#gTr)"/>
<circle cx="2454.8" cy="1309.5" r="15" fill="url(#gTr)"/>
<rect x="2177.9" y="1304" width="11" height="11" fill="#333"/>
<path d="M2248 1303.5 L2260 1310 L2248 1317 Z" fill="#333"/>
<path d="M2314.6 1303.5 H2311.8 V1317.5 H2314.6 M2324.8 1303.5 H2327.6 V1317.5 H2324.8" fill="none" stroke="#333" stroke-width="3"/>
<rect x="2315.8" y="1308.6" width="2.4" height="2.6" fill="#333"/><rect x="2319.0" y="1308.6" width="2.4" height="2.6" fill="#333"/><rect x="2322.2" y="1308.6" width="2.4" height="2.6" fill="#333"/>
<path d="M2387.6 1309.2 C2384.2 1304.6 2378.6 1304.6 2378.6 1309.2 C2378.6 1313.8 2384.2 1313.8 2387.6 1309.2 C2391 1304.6 2396.6 1304.6 2396.6 1309.2 C2396.6 1313.8 2391 1313.8 2387.6 1309.2 Z" fill="none" stroke="#333" stroke-width="2.9"/>
<path d="M2448 1308 A7 7 0 0 1 2460.5 1305 M2461.5 1311 A7 7 0 0 1 2449 1314" fill="none" stroke="#333" stroke-width="2.6"/>
<path d="M2457.5 1302 L2463 1305.5 L2458 1308.5 Z M2452 1317 L2446.5 1313.5 L2451.5 1310.5 Z" fill="#333"/>
<rect x="2148" y="1333" width="401" height="45" fill="url(#gCtl)"/>
<rect x="2147.5" y="1331.6" width="401.5" height="1.6" fill="#333"/>
<rect x="2352.7" y="1333" width="1.6" height="45" fill="#333"/>
<circle cx="2195" cy="1355.6" r="15" fill="url(#gTr)"/>
<circle cx="2514.6" cy="1355.6" r="15" fill="url(#gTr)"/>
<path d="M2194 1349 L2188.5 1355.6 L2194 1362 M2200 1349 L2194.5 1355.6 L2200 1362" fill="none" stroke="#333" stroke-width="2.4"/>
<path d="M2510 1349 L2515.5 1355.6 L2510 1362 M2516 1349 L2521.5 1355.6 L2516 1362" fill="none" stroke="#333" stroke-width="2.4"/>
<text x="2235.4" y="1367.5" font-size="33.43" fill="#303030" text-anchor="start" textLength="76.2" lengthAdjust="spacingAndGlyphs" stroke="#303030" stroke-width="0.9">Back</text>
<text x="2394.9" y="1367.5" font-size="33.43" fill="#303030" text-anchor="start" textLength="77.7" lengthAdjust="spacingAndGlyphs" stroke="#303030" stroke-width="0.9">Next</text>
</svg></div></body></html>
